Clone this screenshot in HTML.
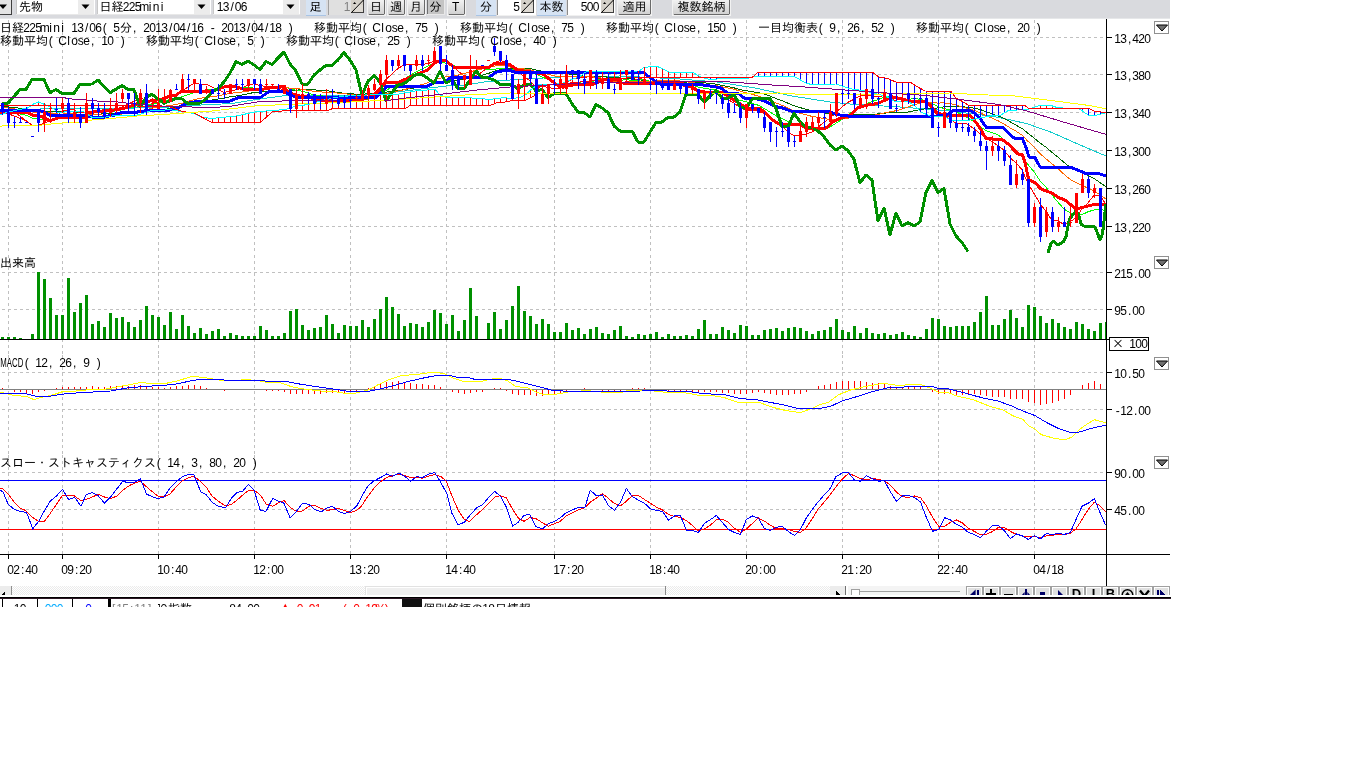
<!DOCTYPE html>
<html lang="ja"><head><meta charset="utf-8"><title>日経225mini チャート</title>
<style>html,body{margin:0;padding:0;background:#fff;overflow:hidden}body{width:1366px;height:768px;position:relative;font-family:'Liberation Sans','IPAGothic',sans-serif;font-size:12px}svg{position:absolute;left:0;top:0;display:block;will-change:transform}text{font-family:'Liberation Sans','IPAGothic',sans-serif;white-space:pre}</style>
</head><body>
<svg width="1366" height="768" viewBox="0 0 1366 768" shape-rendering="crispEdges">
<rect x="0" y="0" width="1366" height="768" fill="#fff"/>
<g stroke="#c0c0c0" stroke-width="1" stroke-dasharray="3 3"><line x1="8.5" y1="20" x2="8.5" y2="254"/><line x1="8.5" y1="255" x2="8.5" y2="355"/><line x1="8.5" y1="355" x2="8.5" y2="455"/><line x1="8.5" y1="455" x2="8.5" y2="554"/><line x1="62.5" y1="20" x2="62.5" y2="254"/><line x1="62.5" y1="255" x2="62.5" y2="355"/><line x1="62.5" y1="355" x2="62.5" y2="455"/><line x1="62.5" y1="455" x2="62.5" y2="554"/><line x1="158.5" y1="20" x2="158.5" y2="254"/><line x1="158.5" y1="255" x2="158.5" y2="355"/><line x1="158.5" y1="355" x2="158.5" y2="455"/><line x1="158.5" y1="455" x2="158.5" y2="554"/><line x1="254.5" y1="20" x2="254.5" y2="254"/><line x1="254.5" y1="255" x2="254.5" y2="355"/><line x1="254.5" y1="355" x2="254.5" y2="455"/><line x1="254.5" y1="455" x2="254.5" y2="554"/><line x1="350.5" y1="20" x2="350.5" y2="254"/><line x1="350.5" y1="255" x2="350.5" y2="355"/><line x1="350.5" y1="355" x2="350.5" y2="455"/><line x1="350.5" y1="455" x2="350.5" y2="554"/><line x1="446.5" y1="20" x2="446.5" y2="254"/><line x1="446.5" y1="255" x2="446.5" y2="355"/><line x1="446.5" y1="355" x2="446.5" y2="455"/><line x1="446.5" y1="455" x2="446.5" y2="554"/><line x1="554.5" y1="20" x2="554.5" y2="254"/><line x1="554.5" y1="255" x2="554.5" y2="355"/><line x1="554.5" y1="355" x2="554.5" y2="455"/><line x1="554.5" y1="455" x2="554.5" y2="554"/><line x1="650.5" y1="20" x2="650.5" y2="254"/><line x1="650.5" y1="255" x2="650.5" y2="355"/><line x1="650.5" y1="355" x2="650.5" y2="455"/><line x1="650.5" y1="455" x2="650.5" y2="554"/><line x1="746.5" y1="20" x2="746.5" y2="254"/><line x1="746.5" y1="255" x2="746.5" y2="355"/><line x1="746.5" y1="355" x2="746.5" y2="455"/><line x1="746.5" y1="455" x2="746.5" y2="554"/><line x1="842.5" y1="20" x2="842.5" y2="254"/><line x1="842.5" y1="255" x2="842.5" y2="355"/><line x1="842.5" y1="355" x2="842.5" y2="455"/><line x1="842.5" y1="455" x2="842.5" y2="554"/><line x1="938.5" y1="20" x2="938.5" y2="254"/><line x1="938.5" y1="255" x2="938.5" y2="355"/><line x1="938.5" y1="355" x2="938.5" y2="455"/><line x1="938.5" y1="455" x2="938.5" y2="554"/><line x1="1034.5" y1="20" x2="1034.5" y2="254"/><line x1="1034.5" y1="255" x2="1034.5" y2="355"/><line x1="1034.5" y1="355" x2="1034.5" y2="455"/><line x1="1034.5" y1="455" x2="1034.5" y2="554"/><line x1="2" y1="37.5" x2="1106" y2="37.5"/><line x1="2" y1="74.5" x2="1106" y2="74.5"/><line x1="2" y1="112.5" x2="1106" y2="112.5"/><line x1="2" y1="150.5" x2="1106" y2="150.5"/><line x1="2" y1="188.5" x2="1106" y2="188.5"/><line x1="2" y1="226.5" x2="1106" y2="226.5"/><line x1="2" y1="272.5" x2="1106" y2="272.5"/><line x1="2" y1="309.5" x2="1106" y2="309.5"/><line x1="2" y1="372.5" x2="1106" y2="372.5"/><line x1="2" y1="409.5" x2="1106" y2="409.5"/><line x1="2" y1="472.5" x2="1106" y2="472.5"/><line x1="2" y1="509.5" x2="1106" y2="509.5"/></g>
<g id="main">
<polyline points="0,112 40,109 114,108.6 170,107 201,105 232,103.5 255,99.7 282,96 340,95.5 380,94 446,86 465,85 484,82 510,80 560,77 620,76 680,79 717,82 755,88 792,96 830,102 850,104 900,107 950,111 990,116 1005,118.7 1027,123.7 1052,132.5 1077,143.7 1106,156" fill="none" stroke="#1cc" stroke-width="1" />
<polyline points="2,106.255 8,106.928 14,107.59 20,108.253 26,108.916 32,110.139 38,110.812 44,111.067 50,111.148 56,111.26 62,111.148 68,111.604 74,111.859 80,112.531 86,112.419 92,112.524 98,112.78 104,113.235 110,113.323 116,113.208 122,112.693 128,112.403 134,112.298 140,111.783 146,111.943 152,111.598 158,110.81 164,109.757 170,108.444 176,107.118 182,104.83 188,103.094 194,101.789 200,101.177 206,100.401 212,100.013 218,99.0578 224,98.3026 230,96.766 236,96.002 242,95.0171 248,93.7218 254,92.4823 260,91.864 266,91.303 272,91.002 278,90.628 284,90.083 290,90.634 296,90.134 302,89.76 308,89.586 314,89.86 320,90.31 326,90.674 332,91.458 338,92.422 344,93.372 350,93.782 356,94.166 362,94.106 368,93.906 374,93.446 380,92.99 386,92.086 392,91.306 398,90.546 404,89.69 410,88.76 416,87.656 422,86.812 428,85.556 434,84.046 440,82.33 446,81.27 452,80.854 458,80.264 464,79.14 470,77.9 476,76.58 482,75.24 488,73.5 494,71.46 500,69.74 506,68.58 512,68.7 518,68.4 524,68.144 530,68.504 536,70.084 542,71.204 548,72.164 554,72.912 560,73.292 566,73.808 572,74.204 578,75.032 584,76.272 590,76.552 596,77.032 602,76.872 608,77.06 614,77.608 620,78.008 626,78.228 632,78.708 638,79.428 644,80.528 650,81.504 656,82.08 662,81.656 668,81.992 674,82.344 680,82.424 686,82.024 692,81.9 698,82.408 704,82.804 710,83.392 716,84.164 722,85.336 728,86.668 734,87.848 740,89.688 746,90.544 752,91.664 758,92.616 764,94.108 770,96.148 776,98.548 782,100.688 788,103.248 794,105.728 800,107.632 806,109.156 812,110.66 818,111.784 824,113.088 830,114.208 836,114.328 842,114.512 848,114.364 854,114.7 860,114.792 866,114.66 872,114.432 878,113.892 884,113.152 890,112.752 896,112.916 902,112.556 908,111.996 914,110.896 920,109.596 926,108.696 932,108.52 938,107.904 944,106.764 950,106.348 956,106.528 962,106.768 968,107.308 974,108.092 980,109.412 986,111.652 992,113.732 998,115.996 1004,118.292 1010,121.772 1016,125.156 1022,128.436 1028,133.336 1034,137.896 1040,143.016 1046,147.196 1052,152.276 1058,157.236 1064,162.336 1070,167.276 1076,170.636 1082,172.796 1088,175.432 1094,178.44 1100,182.536 1106,186.896" fill="none" stroke="#060" stroke-width="1" />
<polyline points="2,111.276 8,113.639 14,115.952 20,118.265 26,120.578 32,125.419 38,125.419 44,123.382 50,120.477 56,117.723 62,111.045 68,109.96 74,109.96 80,112.915 86,111.796 92,112.881 98,111.88 104,112.881 110,109.96 116,109.945 122,106.845 128,104.119 134,101.316 140,98.3 146,99.675 152,101.8 158,102.67 164,101.245 170,100.57 176,96.45 182,91.58 188,86.84 194,83.54 200,84.14 206,84.14 212,86.96 218,89.78 224,92.53 230,90.86 236,89.8 242,87.9 248,85.2 254,83.78 260,85.45 266,86.45 272,86.77 278,88.65 284,89.32 290,92.15 296,93.83 302,95.59 308,97.46 314,100.13 320,98.95 326,99.15 332,100.07 338,101.02 344,101.1 350,101.5 356,101.6 362,100.2 368,97.2 374,92.9 380,86.9 386,79.4 392,73.9 398,68.4 404,65 410,64.3 416,64.3 422,64.3 428,63.7 434,61.1 440,60 446,61.9 452,65.8 458,71 464,75.6 470,76.8 476,75.7 482,72 488,67.2 494,62.7 500,60.7 506,61.6 512,67.5 518,71.7 524,76.32 530,80.72 536,86.92 542,86.42 548,87.22 554,88.84 560,88.24 566,82.92 572,79.3 578,78.04 584,77.9 590,76.3 596,78.02 602,79.14 608,81.14 614,82.28 620,84.08 626,81.68 632,81.18 638,79.04 644,77.3 650,78.18 656,80.86 662,82.24 668,84.52 674,85.4 680,85.32 686,86.64 692,87.64 698,89.3 704,91.14 710,93.08 716,93.62 722,96.48 728,99.34 734,103.12 740,107.78 746,109.92 752,110.78 758,110.88 764,113.58 770,116.38 776,121.7 782,126.3 788,132.2 794,135.4 800,135.6 806,133.9 812,132.1 818,127.2 824,122.2 830,118.2 836,112.5 842,106.9 848,102.2 854,99.2 860,96 866,95.28 872,96.08 878,96.98 884,95.38 890,97.58 896,101.2 902,101.4 908,101.4 914,102.3 920,100.6 926,100.6 932,106.12 938,111.74 944,114.74 950,119.36 956,123.06 962,123.34 968,124.22 974,128.84 980,133.52 986,138.12 992,141.72 998,145.64 1004,150.2 1010,157.8 1016,162.8 1022,169.6 1028,183.68 1034,193.4 1040,203.8 1046,211.4 1052,220.6 1058,220.9 1064,224.5 1070,221.9 1076,217.8 1082,208.72 1088,202.72 1094,195.26 1100,195.66 1106,204.36" fill="none" stroke="#f00" stroke-width="1" />
<polyline points="2,110.238 8,111.52 14,112.776 20,114.032 26,115.289 32,117.948 38,119.229 44,119.467 50,119.271 56,119.15 62,118.232 68,117.689 74,116.671 80,116.696 86,114.76 92,111.963 98,110.92 104,111.421 110,111.437 116,110.871 122,109.863 128,107.999 134,107.099 140,104.13 146,104.81 152,104.323 158,103.395 164,101.281 170,99.435 176,98.0625 182,96.69 188,94.755 194,92.3925 200,92.355 206,90.295 212,89.27 218,88.31 224,88.035 230,87.5 236,86.97 242,87.43 248,87.49 254,88.155 260,88.155 266,88.125 272,87.335 278,86.925 284,86.55 290,88.8 296,90.14 302,91.18 308,93.055 314,94.725 320,95.55 326,96.49 332,97.83 338,99.24 344,100.615 350,100.225 356,100.375 362,100.135 368,99.11 374,97 380,94.2 386,90.5 392,87.05 398,82.8 404,78.95 410,75.6 416,71.85 422,69.1 428,66.05 434,63.05 440,62.15 446,63.1 452,65.05 458,67.35 464,68.35 470,68.4 476,68.8 482,68.9 488,69.1 494,69.15 500,68.75 506,68.65 512,69.75 518,69.45 524,69.51 530,70.71 536,74.26 542,76.96 548,79.46 554,82.58 560,84.48 566,84.92 572,82.86 578,82.63 584,83.37 590,82.27 596,80.47 602,79.22 608,79.59 614,80.09 620,80.19 626,79.85 632,80.16 638,80.09 644,79.79 650,81.13 656,81.27 662,81.71 668,81.78 674,81.35 680,81.75 686,83.75 692,84.94 698,86.91 704,88.27 710,89.2 716,90.13 722,92.06 728,94.32 734,97.13 740,100.43 746,101.77 752,103.63 758,105.11 764,108.35 770,112.08 776,115.81 782,118.54 788,121.54 794,124.49 800,125.99 806,127.8 812,129.2 818,129.7 824,128.8 830,126.9 836,123.2 842,119.5 848,114.7 854,110.7 860,107.1 866,103.89 872,101.49 878,99.59 884,97.29 890,96.79 896,98.24 902,98.74 908,99.19 914,98.84 920,99.09 926,100.9 932,103.76 938,106.57 944,108.52 950,109.98 956,111.83 962,114.73 968,117.98 974,121.79 980,126.44 986,130.59 992,132.53 998,134.93 1004,139.52 1010,145.66 1016,150.46 1022,155.66 1028,164.66 1034,171.8 1040,180.8 1046,187.1 1052,195.1 1058,202.29 1064,208.95 1070,212.85 1076,214.6 1082,214.66 1088,211.81 1094,209.88 1100,208.78 1106,211.08" fill="none" stroke="#0f0" stroke-width="1" />
<polyline points="2,107.269 8,108.06 14,108.838 20,109.616 26,110.394 32,111.874 38,112.665 44,112.934 50,112.986 56,113.075 62,112.885 68,113.405 74,113.674 80,114.464 86,114.274 92,114.355 98,114.624 104,115.144 110,115.204 116,115.011 122,114.048 128,112.844 134,111.885 140,110.413 146,109.785 152,108.143 158,107.157 164,106.351 170,105.436 176,104.467 182,103.277 188,101.377 194,99.7457 200,98.2425 206,97.5526 212,96.7963 218,95.8523 224,94.6579 230,93.4675 236,92.5162 242,92.06 248,91.1225 254,90.2737 260,90.255 266,89.21 272,88.3025 278,87.6175 284,87.2925 290,88.15 296,88.555 302,89.305 308,90.2725 314,91.44 320,91.8525 326,92.3075 332,92.5825 338,93.0825 344,93.5825 350,94.5125 356,95.2575 362,95.6575 368,96.0825 374,95.8625 380,94.875 386,93.495 392,92.44 398,91.02 404,89.7825 410,87.9125 416,86.1125 422,84.6175 428,82.58 434,80.025 440,78.175 446,76.8 452,76.05 458,75.075 464,73.65 470,72 476,70.325 482,69 488,67.575 494,66.1 500,65.45 506,65.875 512,67.4 518,68.4 524,68.93 530,69.555 536,71.53 542,72.93 548,74.28 554,75.865 560,76.615 566,76.785 572,76.305 578,76.04 584,76.44 590,76.49 596,77.365 602,78.09 608,79.525 614,81.335 620,82.335 626,82.385 632,81.51 638,81.36 644,81.58 650,81.7 656,80.87 662,80.465 668,80.685 674,80.72 680,80.97 686,81.8 692,82.55 698,83.5 704,84.03 710,85.165 716,85.7 722,86.885 728,88.05 734,89.24 740,91.09 746,92.76 752,94.285 758,96.01 764,98.31 770,100.64 776,102.97 782,105.3 788,107.93 794,110.81 800,113.21 806,114.785 812,116.415 818,117.405 824,118.575 830,119.49 836,119.505 842,119.02 848,118.12 854,117.595 860,116.545 866,115.845 872,115.345 878,114.645 884,113.045 890,111.845 896,110.72 902,109.12 908,106.945 914,104.77 920,103.095 926,102.395 932,102.625 938,103.08 944,102.905 950,103.385 956,105.035 962,106.735 968,108.585 974,110.315 980,112.765 986,115.745 992,118.145 998,120.75 1004,124.02 1010,127.82 1016,131.145 1022,135.195 1028,141.32 1034,146.795 1040,153.62 1046,158.845 1052,163.815 1058,168.61 1064,174.235 1070,179.255 1076,182.53 1082,185.16 1088,188.235 1094,190.84 1100,194.79 1106,199.09" fill="none" stroke="#f60" stroke-width="1" />
<polyline points="0,112.4 27.5,112.4 33.4,115.7 40,116 46.7,119 50,120.7 58.4,117.8 83.5,117.4 87.6,113.2 96,111.5 114,110 125,108 131,106 137.5,103.7 150,101 161,99.4 170,96 176,95 182,91 200,91 212,91 225,86.6 236,86.6 242.5,89 260,89.7 270,88 282,86.6 287.5,91 295,96.6 302,96.6 309,97 316,100 327,101 340,101 360,100 369,97.5 376,94 381,88 386,82.5 399,82 405,79.4 415,75 427.5,70 435,62.5 440,60.6 446,60.6 454,67.5 489,67.5 495,63 504,63 509,64.3 518,70 530,72 543,74 553,82 558.6,86 563,87.3 567,85.2 579.5,84.8 592,84.8 598.7,82 603.7,79.8 617.5,80 621,83 680,83.3 687.5,84.7 692.5,87 698.7,92 722.5,93 728,96 734.4,100.4 740.6,104 746,108.5 760,108.5 766,113.5 772.5,119.7 778.7,124 800,124.7 806,128 821,129 826,128 834,121 841,118 850,115.5 857.5,108 866,105.4 877.5,103.5 886,99.7 892.5,97 900,98.5 910,101 925,101.6 930,104.7 936,113 942.5,115.4 970,115.4 975,121 981,129.7 986,138.5 1002.5,139.7 1009,144.7 1015,151 1017.5,153.7 1022.5,155 1025,162.5 1028.7,179.6 1035,182.7 1041,189 1052.5,193.4 1058.7,197.7 1065,200 1071,205 1076,209.6 1081,207.7 1096,204 1106,205" fill="none" stroke="#f00" stroke-width="3" />
<polyline points="0,110 37.5,110.3 43.4,111.5 50,115.3 87.6,115.7 92,117 104,117 108.5,116 114,115.7 116,113.7 125,112 137.5,112 150,110 170,110 177.5,108.5 186,103.5 200,101 230,101 240,97 261,97 270,91 282.5,91 290,94.7 295,97 340,97.5 375,98 381,92.5 387,86 427.5,86 435,82 444,82 450,78 489,77.7 495,72.5 502,71 510,70.6 516,72.5 644,72.5 649,77 655,81 662.5,85 680,84 696,84 714,86.6 721,88 727.5,93 739,94 745,98.5 757.5,99 766,101.6 774,106 782.5,108 792.5,111.6 830,112 837.5,114.7 850,116.3 937,116 946,115.4 952.5,111 970,110.4 975,113.5 981,119.7 986,127 1002.5,127 1009,133.5 1014,138 1022.5,138.7 1026,147.5 1029,157 1035,157.5 1040,167 1071,167.5 1077.5,170 1086,173.5 1100,174 1106,176" fill="none" stroke="#00f" stroke-width="3" />
<polyline points="2,103.75 8,103.1 14,96.25 20,89.75 26,89.4 32,79.4 38,79.4 44,79.75 50,92.75 56,89.4 62,93.5 68,93.5 74,93.5 80,84.4 86,84.1 92,84 98,80 104,86.4 110,92.75 116,89.1 122,85.6 128,89.4 134,89.75 140,106.9 146,97.5 152,94.4 158,98.75 164,103.1 170,101 176,98.5 182,99 188,103.5 194,103.5 200,103 206,99 212,92 218,88.5 224,82 230,73 236,61.5 242,64.5 248,61 254,65 260,69.5 266,61.5 272,64.5 278,58 284,52 290,64 296,71 302,84 308,84 314,75 320,70 326,65.5 332,65.5 338,60 344,52.5 350,60 356,70 362,95 368,81 374,75.6 380,82 386,101 392,92.5 398,85 404,83.7 410,79 416,74.4 422,74.4 428,78.7 434,83 440,71 446,83 452,80 458,88.7 464,88.7 470,80 476,71 482,77.5 488,78 494,80 500,84.4 506,84.4 512,84.4 518,89.4 524,84.4 530,84 536,91 542,89.4 548,97.7 554,93.6 560,93.7 566,93.7 572,103.7 578,112 584,112.5 590,117 596,104.4 602,108 608,112.5 614,126 620,131 626,131 632,131 638,142 644,142 650,132 656,122.5 662,122 668,117.5 674,117 680,112 686,94 692,94 698,94 704,102 710,96 716,90.4 722,98 728,98.5 734,94 740,107 746,108.5 752,99 758,98.5 764,98.5 770,98.5 776,108.5 782,126.6 788,126.6 794,113.5 800,121.6 806,127 812,128 818,131 824,136.6 830,145 836,150 842,146 848,150.6 854,159.4 860,183 866,175 872,180 878,221 884,208 890,235 896,213 902,226 908,222.5 914,226 920,222 926,192.5 932,180.6 938,192.5 944,188.7 950,224 956,236 962,242.5 968,251.5" fill="none" stroke="#009000" stroke-width="3" stroke-linejoin="round"/>
<polyline points="1048,252.7 1051,243.4 1053.7,241.5 1058,245 1063.7,241.5 1066,236.5 1069.4,219 1076,211 1078.7,214.6 1081,224 1083.7,226 1093.7,226 1096,229 1100,240 1102.5,234 1106,204" fill="none" stroke="#009000" stroke-width="3" stroke-linejoin="round"/>
<line x1="38.5" y1="102.2" x2="38.5" y2="105.3" stroke="#f00" stroke-width="1"/>
<line x1="44.5" y1="104.3" x2="44.5" y2="105.3" stroke="#f00" stroke-width="1"/>
<line x1="50.5" y1="107.0" x2="50.5" y2="105.3" stroke="#f00" stroke-width="1"/>
<line x1="206.5" y1="117.8" x2="206.5" y2="119.4" stroke="#f00" stroke-width="1"/>
<line x1="212.5" y1="118.4" x2="212.5" y2="122.0" stroke="#f00" stroke-width="1"/>
<line x1="218.5" y1="117.8" x2="218.5" y2="122.0" stroke="#f00" stroke-width="1"/>
<line x1="224.5" y1="117.2" x2="224.5" y2="122.0" stroke="#f00" stroke-width="1"/>
<line x1="230.5" y1="116.6" x2="230.5" y2="122.0" stroke="#f00" stroke-width="1"/>
<line x1="236.5" y1="116.0" x2="236.5" y2="122.0" stroke="#f00" stroke-width="1"/>
<line x1="242.5" y1="114.7" x2="242.5" y2="122.0" stroke="#f00" stroke-width="1"/>
<line x1="248.5" y1="113.5" x2="248.5" y2="122.0" stroke="#f00" stroke-width="1"/>
<line x1="254.5" y1="112.2" x2="254.5" y2="122.0" stroke="#f00" stroke-width="1"/>
<line x1="260.5" y1="111.5" x2="260.5" y2="122.0" stroke="#f00" stroke-width="1"/>
<line x1="266.5" y1="111.0" x2="266.5" y2="117.5" stroke="#f00" stroke-width="1"/>
<line x1="272.5" y1="110.5" x2="272.5" y2="112.1" stroke="#f00" stroke-width="1"/>
<line x1="278.5" y1="110.1" x2="278.5" y2="111.3" stroke="#f00" stroke-width="1"/>
<line x1="284.5" y1="109.5" x2="284.5" y2="110.9" stroke="#f00" stroke-width="1"/>
<line x1="290.5" y1="108.5" x2="290.5" y2="110.4" stroke="#f00" stroke-width="1"/>
<line x1="296.5" y1="105.9" x2="296.5" y2="110.4" stroke="#f00" stroke-width="1"/>
<line x1="302.5" y1="105.3" x2="302.5" y2="110.4" stroke="#f00" stroke-width="1"/>
<line x1="308.5" y1="104.6" x2="308.5" y2="110.4" stroke="#f00" stroke-width="1"/>
<line x1="314.5" y1="102.8" x2="314.5" y2="110.4" stroke="#f00" stroke-width="1"/>
<line x1="320.5" y1="101.0" x2="320.5" y2="110.4" stroke="#f00" stroke-width="1"/>
<line x1="326.5" y1="99.7" x2="326.5" y2="110.4" stroke="#f00" stroke-width="1"/>
<line x1="332.5" y1="98.3" x2="332.5" y2="108.9" stroke="#f00" stroke-width="1"/>
<line x1="338.5" y1="97.0" x2="338.5" y2="108.7" stroke="#f00" stroke-width="1"/>
<line x1="344.5" y1="96.3" x2="344.5" y2="108.7" stroke="#f00" stroke-width="1"/>
<line x1="350.5" y1="95.9" x2="350.5" y2="108.7" stroke="#f00" stroke-width="1"/>
<line x1="356.5" y1="95.5" x2="356.5" y2="108.7" stroke="#f00" stroke-width="1"/>
<line x1="362.5" y1="95.2" x2="362.5" y2="108.7" stroke="#f00" stroke-width="1"/>
<line x1="368.5" y1="94.8" x2="368.5" y2="108.7" stroke="#f00" stroke-width="1"/>
<line x1="374.5" y1="94.4" x2="374.5" y2="108.7" stroke="#f00" stroke-width="1"/>
<line x1="380.5" y1="94.1" x2="380.5" y2="108.7" stroke="#f00" stroke-width="1"/>
<line x1="386.5" y1="94.0" x2="386.5" y2="108.7" stroke="#f00" stroke-width="1"/>
<line x1="392.5" y1="94.0" x2="392.5" y2="108.7" stroke="#f00" stroke-width="1"/>
<line x1="398.5" y1="94.0" x2="398.5" y2="108.7" stroke="#f00" stroke-width="1"/>
<line x1="404.5" y1="93.1" x2="404.5" y2="108.7" stroke="#f00" stroke-width="1"/>
<line x1="410.5" y1="91.9" x2="410.5" y2="105.6" stroke="#f00" stroke-width="1"/>
<line x1="416.5" y1="90.9" x2="416.5" y2="105.6" stroke="#f00" stroke-width="1"/>
<line x1="422.5" y1="90.4" x2="422.5" y2="105.6" stroke="#f00" stroke-width="1"/>
<line x1="428.5" y1="90.0" x2="428.5" y2="105.6" stroke="#f00" stroke-width="1"/>
<line x1="434.5" y1="89.5" x2="434.5" y2="105.6" stroke="#f00" stroke-width="1"/>
<line x1="440.5" y1="95.0" x2="440.5" y2="105.6" stroke="#f00" stroke-width="1"/>
<line x1="446.5" y1="97.5" x2="446.5" y2="105.6" stroke="#f00" stroke-width="1"/>
<line x1="452.5" y1="97.5" x2="452.5" y2="105.6" stroke="#f00" stroke-width="1"/>
<line x1="458.5" y1="97.5" x2="458.5" y2="105.6" stroke="#f00" stroke-width="1"/>
<line x1="464.5" y1="97.5" x2="464.5" y2="105.6" stroke="#f00" stroke-width="1"/>
<line x1="470.5" y1="97.9" x2="470.5" y2="105.6" stroke="#f00" stroke-width="1"/>
<line x1="476.5" y1="98.3" x2="476.5" y2="105.6" stroke="#f00" stroke-width="1"/>
<line x1="482.5" y1="98.8" x2="482.5" y2="105.6" stroke="#f00" stroke-width="1"/>
<line x1="488.5" y1="99.2" x2="488.5" y2="105.6" stroke="#f00" stroke-width="1"/>
<line x1="494.5" y1="98.9" x2="494.5" y2="103.9" stroke="#f00" stroke-width="1"/>
<line x1="500.5" y1="98.2" x2="500.5" y2="102.7" stroke="#f00" stroke-width="1"/>
<line x1="506.5" y1="97.9" x2="506.5" y2="101.8" stroke="#f00" stroke-width="1"/>
<line x1="512.5" y1="98.5" x2="512.5" y2="100.9" stroke="#f00" stroke-width="1"/>
<line x1="518.5" y1="97.6" x2="518.5" y2="100.8" stroke="#f00" stroke-width="1"/>
<line x1="524.5" y1="95.4" x2="524.5" y2="100.6" stroke="#f00" stroke-width="1"/>
<line x1="530.5" y1="90.5" x2="530.5" y2="98.0" stroke="#f00" stroke-width="1"/>
<line x1="536.5" y1="85.8" x2="536.5" y2="92.7" stroke="#f00" stroke-width="1"/>
<line x1="542.5" y1="84.4" x2="542.5" y2="85.8" stroke="#f00" stroke-width="1"/>
<line x1="566.5" y1="81.9" x2="566.5" y2="83.4" stroke="#f00" stroke-width="1"/>
<line x1="572.5" y1="79.3" x2="572.5" y2="82.8" stroke="#f00" stroke-width="1"/>
<line x1="578.5" y1="77.4" x2="578.5" y2="82.2" stroke="#f00" stroke-width="1"/>
<line x1="584.5" y1="73.1" x2="584.5" y2="81.6" stroke="#f00" stroke-width="1"/>
<line x1="590.5" y1="71.4" x2="590.5" y2="81.0" stroke="#f00" stroke-width="1"/>
<line x1="596.5" y1="71.3" x2="596.5" y2="80.4" stroke="#f00" stroke-width="1"/>
<line x1="602.5" y1="71.3" x2="602.5" y2="79.8" stroke="#f00" stroke-width="1"/>
<line x1="608.5" y1="71.2" x2="608.5" y2="79.4" stroke="#f00" stroke-width="1"/>
<line x1="614.5" y1="71.2" x2="614.5" y2="79.0" stroke="#f00" stroke-width="1"/>
<line x1="620.5" y1="71.1" x2="620.5" y2="78.5" stroke="#f00" stroke-width="1"/>
<line x1="626.5" y1="71.1" x2="626.5" y2="78.0" stroke="#f00" stroke-width="1"/>
<line x1="632.5" y1="71.1" x2="632.5" y2="77.6" stroke="#f00" stroke-width="1"/>
<line x1="638.5" y1="71.0" x2="638.5" y2="77.2" stroke="#f00" stroke-width="1"/>
<line x1="644.5" y1="67.5" x2="644.5" y2="77.0" stroke="#f00" stroke-width="1"/>
<line x1="650.5" y1="66.8" x2="650.5" y2="77.0" stroke="#f00" stroke-width="1"/>
<line x1="656.5" y1="66.0" x2="656.5" y2="77.0" stroke="#f00" stroke-width="1"/>
<line x1="662.5" y1="68.5" x2="662.5" y2="77.0" stroke="#f00" stroke-width="1"/>
<line x1="668.5" y1="71.5" x2="668.5" y2="77.0" stroke="#f00" stroke-width="1"/>
<line x1="674.5" y1="72.2" x2="674.5" y2="77.0" stroke="#f00" stroke-width="1"/>
<line x1="680.5" y1="72.5" x2="680.5" y2="77.0" stroke="#f00" stroke-width="1"/>
<line x1="686.5" y1="72.2" x2="686.5" y2="77.0" stroke="#f00" stroke-width="1"/>
<line x1="692.5" y1="72.0" x2="692.5" y2="77.1" stroke="#f00" stroke-width="1"/>
<line x1="698.5" y1="75.4" x2="698.5" y2="77.1" stroke="#f00" stroke-width="1"/>
<line x1="710.5" y1="77.2" x2="710.5" y2="79.7" stroke="#00f" stroke-width="1"/>
<line x1="716.5" y1="77.2" x2="716.5" y2="79.2" stroke="#00f" stroke-width="1"/>
<line x1="758.5" y1="72.3" x2="758.5" y2="76.2" stroke="#00f" stroke-width="1"/>
<line x1="764.5" y1="72.3" x2="764.5" y2="76.4" stroke="#00f" stroke-width="1"/>
<line x1="770.5" y1="72.3" x2="770.5" y2="76.6" stroke="#00f" stroke-width="1"/>
<line x1="776.5" y1="72.3" x2="776.5" y2="76.7" stroke="#00f" stroke-width="1"/>
<line x1="782.5" y1="72.3" x2="782.5" y2="76.8" stroke="#00f" stroke-width="1"/>
<line x1="788.5" y1="72.3" x2="788.5" y2="76.9" stroke="#00f" stroke-width="1"/>
<line x1="794.5" y1="72.3" x2="794.5" y2="77.0" stroke="#00f" stroke-width="1"/>
<line x1="800.5" y1="72.3" x2="800.5" y2="79.7" stroke="#00f" stroke-width="1"/>
<line x1="806.5" y1="72.3" x2="806.5" y2="83.0" stroke="#00f" stroke-width="1"/>
<line x1="812.5" y1="72.3" x2="812.5" y2="84.7" stroke="#00f" stroke-width="1"/>
<line x1="818.5" y1="72.3" x2="818.5" y2="84.5" stroke="#00f" stroke-width="1"/>
<line x1="824.5" y1="72.3" x2="824.5" y2="84.3" stroke="#00f" stroke-width="1"/>
<line x1="830.5" y1="72.3" x2="830.5" y2="84.2" stroke="#00f" stroke-width="1"/>
<line x1="836.5" y1="72.3" x2="836.5" y2="84.0" stroke="#00f" stroke-width="1"/>
<line x1="842.5" y1="72.3" x2="842.5" y2="86.0" stroke="#00f" stroke-width="1"/>
<line x1="848.5" y1="72.3" x2="848.5" y2="88.0" stroke="#00f" stroke-width="1"/>
<line x1="854.5" y1="72.3" x2="854.5" y2="89.3" stroke="#00f" stroke-width="1"/>
<line x1="860.5" y1="72.3" x2="860.5" y2="90.1" stroke="#00f" stroke-width="1"/>
<line x1="866.5" y1="72.3" x2="866.5" y2="91.4" stroke="#00f" stroke-width="1"/>
<line x1="872.5" y1="72.3" x2="872.5" y2="92.8" stroke="#00f" stroke-width="1"/>
<line x1="878.5" y1="76.3" x2="878.5" y2="94.3" stroke="#00f" stroke-width="1"/>
<line x1="884.5" y1="77.9" x2="884.5" y2="95.8" stroke="#00f" stroke-width="1"/>
<line x1="890.5" y1="79.5" x2="890.5" y2="98.5" stroke="#00f" stroke-width="1"/>
<line x1="896.5" y1="82.0" x2="896.5" y2="101.1" stroke="#00f" stroke-width="1"/>
<line x1="902.5" y1="82.0" x2="902.5" y2="101.5" stroke="#00f" stroke-width="1"/>
<line x1="908.5" y1="82.0" x2="908.5" y2="101.9" stroke="#00f" stroke-width="1"/>
<line x1="914.5" y1="84.7" x2="914.5" y2="105.3" stroke="#00f" stroke-width="1"/>
<line x1="920.5" y1="88.2" x2="920.5" y2="111.0" stroke="#00f" stroke-width="1"/>
<line x1="926.5" y1="91.0" x2="926.5" y2="114.2" stroke="#00f" stroke-width="1"/>
<line x1="932.5" y1="91.2" x2="932.5" y2="116.1" stroke="#00f" stroke-width="1"/>
<line x1="938.5" y1="91.3" x2="938.5" y2="116.6" stroke="#00f" stroke-width="1"/>
<line x1="944.5" y1="91.4" x2="944.5" y2="117.0" stroke="#00f" stroke-width="1"/>
<line x1="950.5" y1="91.6" x2="950.5" y2="119.2" stroke="#00f" stroke-width="1"/>
<line x1="956.5" y1="98.0" x2="956.5" y2="120.3" stroke="#00f" stroke-width="1"/>
<line x1="962.5" y1="101.3" x2="962.5" y2="120.8" stroke="#00f" stroke-width="1"/>
<line x1="968.5" y1="104.8" x2="968.5" y2="120.4" stroke="#00f" stroke-width="1"/>
<line x1="974.5" y1="105.4" x2="974.5" y2="119.3" stroke="#00f" stroke-width="1"/>
<line x1="980.5" y1="105.4" x2="980.5" y2="118.1" stroke="#00f" stroke-width="1"/>
<line x1="986.5" y1="105.5" x2="986.5" y2="116.8" stroke="#00f" stroke-width="1"/>
<line x1="992.5" y1="105.5" x2="992.5" y2="115.9" stroke="#00f" stroke-width="1"/>
<line x1="998.5" y1="105.5" x2="998.5" y2="115.7" stroke="#00f" stroke-width="1"/>
<line x1="1004.5" y1="105.5" x2="1004.5" y2="113.1" stroke="#00f" stroke-width="1"/>
<line x1="1010.5" y1="105.5" x2="1010.5" y2="110.8" stroke="#00f" stroke-width="1"/>
<line x1="1016.5" y1="105.6" x2="1016.5" y2="110.2" stroke="#00f" stroke-width="1"/>
<line x1="1022.5" y1="105.6" x2="1022.5" y2="109.7" stroke="#00f" stroke-width="1"/>
<line x1="1028.5" y1="107.8" x2="1028.5" y2="109.2" stroke="#00f" stroke-width="1"/>
<line x1="1040.5" y1="105.3" x2="1040.5" y2="108.5" stroke="#f00" stroke-width="1"/>
<line x1="1046.5" y1="105.4" x2="1046.5" y2="108.5" stroke="#f00" stroke-width="1"/>
<line x1="1052.5" y1="106.0" x2="1052.5" y2="108.5" stroke="#f00" stroke-width="1"/>
<line x1="1082.5" y1="108.5" x2="1082.5" y2="110.7" stroke="#00f" stroke-width="1"/>
<line x1="1088.5" y1="108.5" x2="1088.5" y2="114.9" stroke="#00f" stroke-width="1"/>
<line x1="1094.5" y1="111.0" x2="1094.5" y2="115.6" stroke="#00f" stroke-width="1"/>
<line x1="1100.5" y1="111.8" x2="1100.5" y2="114.3" stroke="#00f" stroke-width="1"/>
<polyline points="0,114.5 16.7,110 27.5,108 33.4,104 38.4,102 43.4,104 50,107 54,109 58.4,113 66.8,111.5 83.5,111.5 92,117.4 100,118 114,115.7 125,115 137.5,115 150,111 170,109.7 194,113.5 201,117 211,118.5 236,116 255,112 266,111 282.5,109.7 290,108.5 295,106 307.5,104.7 320,101 340,96.5 365,95 381,94 399,94 415,91 435,89.4 440,95 446,97.5 465,97.5 490,99.4 496,98.6 504,97.7 512.7,98.6 521,97 526,94.4 529.4,91 533.6,87.7 537.7,84.4 542.7,84.4 549.4,84.8 554.4,84.4 564.4,82.7 569.5,80.2 574.5,78.5 579.5,76.9 584.5,72.7 587.8,71.4 639,71 644,67.5 656,66 662.5,68.7 669,72 680,72.5 692,72 700,76.6 711,80 720,78.5 750,78 755,76 767,76.6 795,77 806,83 812,84.7 836,84 850,88.7 862,90.4 875,93.5 887,96.6 894,101 909,102 915,106 921,112 930,116 944,117 952,120 965,121 977,118.7 990,116 1000,115.6 1007.5,111 1017.5,110 1027.5,109.4 1035,107 1041,105 1052.5,106 1057.5,107.7 1079,109 1082.5,111 1089,115.6 1095,115.6 1106,112.7" fill="none" stroke="#0ff" stroke-width="1" />
<polyline points="0,105.3 114,105.3 170,107 182.5,111.6 194,113 211,122 261,122 272.5,111.6 282.5,111 290,110.4 327.5,110.4 332.5,108.7 405,108.7 410,105.6 490,105.6 496,103 502,102.5 510,101 525,100.6 534,96 540,86 560,84 600,80 640,77 680,77 752,77.5 758,72.3 872.5,72.3 879,77 887.5,78.5 896,82 910,82 916,86 925,91 951,91.6 956,98 962.5,101.6 969,105.4 1025,105.6 1029,108.5 1089,108.5 1094,111 1106,112.7" fill="none" stroke="#f00" stroke-width="1" />
<polyline points="15,112.4 31.7,125 35,125.3 39,125.3" fill="none" stroke="#f00" stroke-width="1" />
<polyline points="0,126.6 5,125.3 33,125.3 42,125 58.4,123.2 75,122.4 83.5,122.4 92,120 114,118.2 137.5,116 170,114 212,111 255,106 295,104 340,102.5 390,100 427,97.5 465,95 510,93 600,93.5 680,93.5 780,93 805,94.7 850,94.5 900,93.7 950,93 975,94.5 1015,96 1052,100.6 1090,105.6 1106,108.7" fill="none" stroke="#ff0" stroke-width="1" />
<polyline points="0,97.4 65,97.4 66,98.6 78.5,99.4 90,100.3 102,101.5 114,101.5 137.5,104.4 170,106.5 214,107.5 232,106 257,102 282,101 307,100.4 340,101 384,101 410,97.5 446,93.7 477.5,90 510,87 547,85 585,83 680,81.6 730,82 767,84.7 805,87 850,90.4 887,93 925,95.4 962,99.7 1000,104.7 1027,111 1065,122.5 1106,134.4" fill="none" stroke="#800080" stroke-width="1" />
<rect x="2" y="102.8" width="1" height="11.7" fill="#00f"/>
<rect x="1" y="103.2" width="3" height="9.2" fill="#00f"/>
<rect x="8" y="107.4" width="1" height="20.5" fill="#00f"/>
<rect x="7" y="111.5" width="3" height="11.3" fill="#00f"/>
<rect x="14" y="117.0" width="1" height="10.9" fill="#00f"/>
<rect x="13" y="122.2" width="3" height="1.0" fill="#00f"/>
<rect x="20" y="117.0" width="1" height="5.8" fill="#00f"/>
<rect x="19" y="122.2" width="3" height="1.0" fill="#00f"/>
<rect x="26" y="107.4" width="1" height="1.7" fill="#00f"/>
<rect x="25" y="122.2" width="3" height="1.0" fill="#00f"/>
<rect x="32" y="136.3" width="1" height="1.0" fill="#00f"/>
<rect x="31" y="136.3" width="3" height="1.0" fill="#00f"/>
<rect x="38" y="109.0" width="1" height="23.0" fill="#00f"/>
<rect x="37" y="110.7" width="3" height="12.1" fill="#00f"/>
<rect x="44" y="103.2" width="1" height="28.8" fill="#f00"/>
<rect x="43" y="112.4" width="3" height="10.4" fill="#f00"/>
<rect x="50" y="103.2" width="1" height="19.6" fill="#f00"/>
<rect x="49" y="108.0" width="3" height="1.0" fill="#f00"/>
<rect x="56" y="97.8" width="1" height="15.0" fill="#00f"/>
<rect x="55" y="108.5" width="3" height="1.0" fill="#00f"/>
<rect x="62" y="97.8" width="1" height="15.0" fill="#f00"/>
<rect x="61" y="103.2" width="3" height="5.4" fill="#f00"/>
<rect x="68" y="98.2" width="1" height="24.6" fill="#00f"/>
<rect x="67" y="103.2" width="3" height="14.2" fill="#00f"/>
<rect x="74" y="103.2" width="1" height="19.6" fill="#f00"/>
<rect x="73" y="112.4" width="3" height="5.0" fill="#f00"/>
<rect x="80" y="107.4" width="1" height="20.5" fill="#00f"/>
<rect x="79" y="115.3" width="3" height="7.5" fill="#00f"/>
<rect x="86" y="93.2" width="1" height="29.6" fill="#f00"/>
<rect x="85" y="103.2" width="3" height="19.6" fill="#f00"/>
<rect x="92" y="98.2" width="1" height="19.2" fill="#00f"/>
<rect x="91" y="103.2" width="3" height="5.4" fill="#00f"/>
<rect x="98" y="103.2" width="1" height="14.2" fill="#00f"/>
<rect x="97" y="108.2" width="3" height="4.2" fill="#00f"/>
<rect x="104" y="103.2" width="1" height="15.4" fill="#00f"/>
<rect x="103" y="112.4" width="3" height="5.0" fill="#00f"/>
<rect x="110" y="98.2" width="1" height="19.2" fill="#f00"/>
<rect x="109" y="108.2" width="3" height="4.6" fill="#f00"/>
<rect x="116" y="93.1" width="1" height="19.4" fill="#f00"/>
<rect x="115" y="103.1" width="3" height="5.6" fill="#f00"/>
<rect x="122" y="89.4" width="1" height="13.8" fill="#f00"/>
<rect x="121" y="93.1" width="3" height="5.6" fill="#f00"/>
<rect x="128" y="93.1" width="1" height="19.4" fill="#00f"/>
<rect x="127" y="93.1" width="3" height="5.6" fill="#00f"/>
<rect x="134" y="93.1" width="1" height="23.1" fill="#00f"/>
<rect x="133" y="102.9" width="3" height="1.0" fill="#00f"/>
<rect x="140" y="89.4" width="1" height="23.1" fill="#f00"/>
<rect x="139" y="93.1" width="3" height="10.0" fill="#f00"/>
<rect x="146" y="84.4" width="1" height="30.6" fill="#00f"/>
<rect x="145" y="93.1" width="3" height="16.9" fill="#00f"/>
<rect x="152" y="98.1" width="1" height="10.6" fill="#f00"/>
<rect x="151" y="102.9" width="3" height="1.0" fill="#f00"/>
<rect x="158" y="89.4" width="1" height="19.4" fill="#f00"/>
<rect x="157" y="103.1" width="3" height="5.6" fill="#f00"/>
<rect x="164" y="89.4" width="1" height="13.8" fill="#f00"/>
<rect x="163" y="97.5" width="3" height="5.0" fill="#f00"/>
<rect x="170" y="88.5" width="1" height="13.8" fill="#f00"/>
<rect x="169" y="89.8" width="3" height="12.5" fill="#f00"/>
<rect x="176" y="84.1" width="1" height="5.6" fill="#00f"/>
<rect x="175" y="89.1" width="3" height="1.0" fill="#00f"/>
<rect x="182" y="74.1" width="1" height="15.6" fill="#f00"/>
<rect x="181" y="79.1" width="3" height="10.6" fill="#f00"/>
<rect x="188" y="74.1" width="1" height="15.6" fill="#00f"/>
<rect x="187" y="78.9" width="3" height="1.0" fill="#00f"/>
<rect x="194" y="79.1" width="1" height="11.9" fill="#f00"/>
<rect x="193" y="79.1" width="3" height="5.0" fill="#f00"/>
<rect x="200" y="79.1" width="1" height="14.4" fill="#00f"/>
<rect x="199" y="84.1" width="3" height="9.4" fill="#00f"/>
<rect x="206" y="86.0" width="1" height="7.5" fill="#f00"/>
<rect x="205" y="88.5" width="3" height="2.5" fill="#f00"/>
<rect x="212" y="89.1" width="1" height="4.4" fill="#00f"/>
<rect x="211" y="89.1" width="3" height="4.4" fill="#00f"/>
<rect x="218" y="84.1" width="1" height="14.4" fill="#00f"/>
<rect x="217" y="93.2" width="3" height="1.0" fill="#00f"/>
<rect x="224" y="89.1" width="1" height="9.4" fill="#00f"/>
<rect x="223" y="93.2" width="3" height="1.0" fill="#00f"/>
<rect x="230" y="84.1" width="1" height="9.4" fill="#f00"/>
<rect x="229" y="84.1" width="3" height="9.4" fill="#f00"/>
<rect x="236" y="79.1" width="1" height="10.6" fill="#00f"/>
<rect x="235" y="83.9" width="3" height="1.0" fill="#00f"/>
<rect x="242" y="79.1" width="1" height="10.6" fill="#00f"/>
<rect x="241" y="83.9" width="3" height="1.0" fill="#00f"/>
<rect x="248" y="79.1" width="1" height="9.4" fill="#f00"/>
<rect x="247" y="79.1" width="3" height="6.9" fill="#f00"/>
<rect x="254" y="79.1" width="1" height="10.6" fill="#00f"/>
<rect x="253" y="79.1" width="3" height="5.0" fill="#00f"/>
<rect x="260" y="79.1" width="1" height="14.4" fill="#00f"/>
<rect x="259" y="84.1" width="3" height="9.4" fill="#00f"/>
<rect x="266" y="79.1" width="1" height="9.4" fill="#f00"/>
<rect x="265" y="83.9" width="3" height="1.0" fill="#f00"/>
<rect x="272" y="84.1" width="1" height="4.4" fill="#f00"/>
<rect x="271" y="83.9" width="3" height="1.0" fill="#f00"/>
<rect x="278" y="84.1" width="1" height="6.9" fill="#00f"/>
<rect x="277" y="88.5" width="3" height="1.0" fill="#00f"/>
<rect x="284" y="85.4" width="1" height="8.1" fill="#f00"/>
<rect x="283" y="85.4" width="3" height="8.1" fill="#f00"/>
<rect x="290" y="89.1" width="1" height="23.8" fill="#00f"/>
<rect x="289" y="89.1" width="3" height="19.4" fill="#00f"/>
<rect x="296" y="88.5" width="1" height="29.4" fill="#f00"/>
<rect x="295" y="93.5" width="3" height="15.0" fill="#f00"/>
<rect x="302" y="84.1" width="1" height="19.4" fill="#f00"/>
<rect x="301" y="93.5" width="3" height="5.0" fill="#f00"/>
<rect x="308" y="91.6" width="1" height="11.9" fill="#00f"/>
<rect x="307" y="93.5" width="3" height="5.0" fill="#00f"/>
<rect x="314" y="93.5" width="1" height="10.0" fill="#00f"/>
<rect x="313" y="93.5" width="3" height="10.0" fill="#00f"/>
<rect x="320" y="93.5" width="1" height="15.0" fill="#00f"/>
<rect x="319" y="98.2" width="3" height="1.0" fill="#00f"/>
<rect x="326" y="89.1" width="1" height="14.4" fill="#f00"/>
<rect x="325" y="98.5" width="3" height="5.0" fill="#f00"/>
<rect x="332" y="89.1" width="1" height="14.4" fill="#00f"/>
<rect x="331" y="98.2" width="3" height="1.0" fill="#00f"/>
<rect x="338" y="94.8" width="1" height="11.2" fill="#00f"/>
<rect x="337" y="98.5" width="3" height="5.0" fill="#00f"/>
<rect x="344" y="95.0" width="1" height="12.5" fill="#00f"/>
<rect x="343" y="97.5" width="3" height="5.0" fill="#00f"/>
<rect x="350" y="93.8" width="1" height="13.8" fill="#00f"/>
<rect x="349" y="100.0" width="3" height="1.0" fill="#00f"/>
<rect x="356" y="93.8" width="1" height="7.5" fill="#f00"/>
<rect x="355" y="96.9" width="3" height="1.0" fill="#f00"/>
<rect x="362" y="90.0" width="1" height="11.2" fill="#f00"/>
<rect x="361" y="93.8" width="3" height="5.0" fill="#f00"/>
<rect x="368" y="85.0" width="1" height="15.0" fill="#f00"/>
<rect x="367" y="88.1" width="3" height="6.9" fill="#f00"/>
<rect x="374" y="79.4" width="1" height="11.9" fill="#f00"/>
<rect x="373" y="83.8" width="3" height="6.2" fill="#f00"/>
<rect x="380" y="70.0" width="1" height="17.5" fill="#f00"/>
<rect x="379" y="73.8" width="3" height="11.2" fill="#f00"/>
<rect x="386" y="55.0" width="1" height="27.5" fill="#f00"/>
<rect x="385" y="60.0" width="3" height="15.0" fill="#f00"/>
<rect x="392" y="60.0" width="1" height="10.6" fill="#00f"/>
<rect x="391" y="60.0" width="3" height="6.2" fill="#00f"/>
<rect x="398" y="55.0" width="1" height="12.5" fill="#f00"/>
<rect x="397" y="60.0" width="3" height="5.6" fill="#f00"/>
<rect x="404" y="55.0" width="1" height="15.6" fill="#00f"/>
<rect x="403" y="55.0" width="3" height="11.2" fill="#00f"/>
<rect x="410" y="65.0" width="1" height="10.0" fill="#00f"/>
<rect x="409" y="65.0" width="3" height="5.6" fill="#00f"/>
<rect x="416" y="55.0" width="1" height="15.0" fill="#f00"/>
<rect x="415" y="60.0" width="3" height="6.2" fill="#f00"/>
<rect x="422" y="55.0" width="1" height="15.6" fill="#00f"/>
<rect x="421" y="60.0" width="3" height="6.2" fill="#00f"/>
<rect x="428" y="55.0" width="1" height="10.0" fill="#f00"/>
<rect x="427" y="60.2" width="3" height="1.0" fill="#f00"/>
<rect x="434" y="46.9" width="1" height="18.1" fill="#f00"/>
<rect x="433" y="51.2" width="3" height="11.2" fill="#f00"/>
<rect x="440" y="46.2" width="1" height="25.0" fill="#00f"/>
<rect x="439" y="46.2" width="3" height="17.5" fill="#00f"/>
<rect x="446" y="55.0" width="1" height="15.6" fill="#00f"/>
<rect x="445" y="65.0" width="3" height="5.6" fill="#00f"/>
<rect x="452" y="65.0" width="1" height="25.0" fill="#00f"/>
<rect x="451" y="70.0" width="3" height="15.0" fill="#00f"/>
<rect x="458" y="75.0" width="1" height="15.0" fill="#00f"/>
<rect x="457" y="78.8" width="3" height="6.2" fill="#00f"/>
<rect x="464" y="75.0" width="1" height="12.5" fill="#f00"/>
<rect x="463" y="75.0" width="3" height="5.0" fill="#f00"/>
<rect x="470" y="55.0" width="1" height="30.0" fill="#f00"/>
<rect x="469" y="70.0" width="3" height="15.0" fill="#f00"/>
<rect x="476" y="60.0" width="1" height="10.0" fill="#f00"/>
<rect x="475" y="66.2" width="3" height="3.1" fill="#f00"/>
<rect x="482" y="65.0" width="1" height="1.2" fill="#00f"/>
<rect x="481" y="65.2" width="3" height="1.0" fill="#00f"/>
<rect x="488" y="60.4" width="1" height="1.0" fill="#f00"/>
<rect x="487" y="60.4" width="3" height="1.0" fill="#f00"/>
<rect x="494" y="37.5" width="1" height="18.8" fill="#00f"/>
<rect x="493" y="45.6" width="3" height="6.2" fill="#00f"/>
<rect x="500" y="51.2" width="1" height="11.2" fill="#00f"/>
<rect x="499" y="51.2" width="3" height="8.8" fill="#00f"/>
<rect x="506" y="55.0" width="1" height="25.0" fill="#00f"/>
<rect x="505" y="60.0" width="3" height="10.0" fill="#00f"/>
<rect x="512" y="73.9" width="1" height="24.6" fill="#00f"/>
<rect x="511" y="73.9" width="3" height="24.6" fill="#00f"/>
<rect x="518" y="79.4" width="1" height="29.2" fill="#f00"/>
<rect x="517" y="84.4" width="3" height="9.2" fill="#f00"/>
<rect x="524" y="73.9" width="1" height="27.1" fill="#f00"/>
<rect x="523" y="73.9" width="3" height="11.3" fill="#f00"/>
<rect x="530" y="70.2" width="1" height="14.2" fill="#00f"/>
<rect x="529" y="73.9" width="3" height="5.4" fill="#00f"/>
<rect x="536" y="73.9" width="1" height="29.6" fill="#00f"/>
<rect x="535" y="79.4" width="3" height="24.2" fill="#00f"/>
<rect x="542" y="84.4" width="1" height="19.2" fill="#f00"/>
<rect x="541" y="93.6" width="3" height="10.0" fill="#f00"/>
<rect x="548" y="84.4" width="1" height="19.2" fill="#f00"/>
<rect x="547" y="84.4" width="3" height="9.2" fill="#f00"/>
<rect x="554" y="79.4" width="1" height="14.2" fill="#00f"/>
<rect x="553" y="84.2" width="3" height="1.0" fill="#00f"/>
<rect x="560" y="73.9" width="1" height="19.6" fill="#f00"/>
<rect x="559" y="79.4" width="3" height="5.0" fill="#f00"/>
<rect x="566" y="65.2" width="1" height="28.4" fill="#f00"/>
<rect x="565" y="73.9" width="3" height="14.6" fill="#f00"/>
<rect x="572" y="70.2" width="1" height="9.2" fill="#00f"/>
<rect x="571" y="70.2" width="3" height="3.8" fill="#00f"/>
<rect x="578" y="70.2" width="1" height="19.2" fill="#00f"/>
<rect x="577" y="70.2" width="3" height="9.2" fill="#00f"/>
<rect x="584" y="72.7" width="1" height="20.9" fill="#00f"/>
<rect x="583" y="79.4" width="3" height="5.0" fill="#00f"/>
<rect x="590" y="70.2" width="1" height="19.2" fill="#f00"/>
<rect x="589" y="70.2" width="3" height="14.2" fill="#f00"/>
<rect x="596" y="70.2" width="1" height="19.2" fill="#00f"/>
<rect x="595" y="72.7" width="3" height="11.7" fill="#00f"/>
<rect x="602" y="72.7" width="1" height="16.7" fill="#f00"/>
<rect x="601" y="79.4" width="3" height="5.0" fill="#f00"/>
<rect x="608" y="72.7" width="1" height="16.7" fill="#00f"/>
<rect x="607" y="79.4" width="3" height="10.0" fill="#00f"/>
<rect x="614" y="83.8" width="1" height="10.0" fill="#00f"/>
<rect x="613" y="89.0" width="3" height="1.0" fill="#00f"/>
<rect x="620" y="70.0" width="1" height="20.0" fill="#f00"/>
<rect x="619" y="79.4" width="3" height="10.6" fill="#f00"/>
<rect x="626" y="70.0" width="1" height="11.2" fill="#f00"/>
<rect x="625" y="70.0" width="3" height="5.0" fill="#f00"/>
<rect x="632" y="70.0" width="1" height="10.0" fill="#00f"/>
<rect x="631" y="70.0" width="3" height="10.0" fill="#00f"/>
<rect x="638" y="73.1" width="1" height="11.9" fill="#00f"/>
<rect x="637" y="79.0" width="3" height="1.0" fill="#00f"/>
<rect x="644" y="66.9" width="1" height="18.1" fill="#f00"/>
<rect x="643" y="78.8" width="3" height="6.2" fill="#f00"/>
<rect x="650" y="78.8" width="1" height="11.2" fill="#00f"/>
<rect x="649" y="83.5" width="3" height="1.0" fill="#00f"/>
<rect x="656" y="79.4" width="1" height="14.4" fill="#00f"/>
<rect x="655" y="82.5" width="3" height="2.5" fill="#00f"/>
<rect x="662" y="79.4" width="1" height="10.6" fill="#00f"/>
<rect x="661" y="83.8" width="3" height="3.8" fill="#00f"/>
<rect x="668" y="79.4" width="1" height="10.6" fill="#00f"/>
<rect x="667" y="85.0" width="3" height="5.0" fill="#00f"/>
<rect x="674" y="79.4" width="1" height="10.6" fill="#f00"/>
<rect x="673" y="83.8" width="3" height="6.2" fill="#f00"/>
<rect x="680" y="82.9" width="1" height="10.6" fill="#00f"/>
<rect x="679" y="84.1" width="3" height="4.4" fill="#00f"/>
<rect x="686" y="82.9" width="1" height="11.2" fill="#00f"/>
<rect x="685" y="86.0" width="3" height="8.1" fill="#00f"/>
<rect x="692" y="84.1" width="1" height="9.4" fill="#f00"/>
<rect x="691" y="86.0" width="3" height="3.8" fill="#f00"/>
<rect x="698" y="89.1" width="1" height="14.4" fill="#00f"/>
<rect x="697" y="89.1" width="3" height="9.4" fill="#00f"/>
<rect x="704" y="89.8" width="1" height="18.8" fill="#f00"/>
<rect x="703" y="92.9" width="3" height="5.6" fill="#f00"/>
<rect x="710" y="89.1" width="1" height="10.0" fill="#00f"/>
<rect x="709" y="93.0" width="3" height="1.0" fill="#00f"/>
<rect x="716" y="92.9" width="1" height="10.6" fill="#00f"/>
<rect x="715" y="93.0" width="3" height="1.0" fill="#00f"/>
<rect x="722" y="93.5" width="1" height="15.0" fill="#00f"/>
<rect x="721" y="97.9" width="3" height="5.6" fill="#00f"/>
<rect x="728" y="99.1" width="1" height="18.8" fill="#00f"/>
<rect x="727" y="102.9" width="3" height="10.0" fill="#00f"/>
<rect x="734" y="102.9" width="1" height="10.0" fill="#00f"/>
<rect x="733" y="112.4" width="3" height="1.0" fill="#00f"/>
<rect x="740" y="102.9" width="1" height="20.0" fill="#00f"/>
<rect x="739" y="107.9" width="3" height="10.0" fill="#00f"/>
<rect x="746" y="103.5" width="1" height="24.4" fill="#f00"/>
<rect x="745" y="103.5" width="3" height="14.4" fill="#f00"/>
<rect x="752" y="103.5" width="1" height="9.4" fill="#00f"/>
<rect x="751" y="103.5" width="3" height="5.0" fill="#00f"/>
<rect x="758" y="107.9" width="1" height="10.0" fill="#00f"/>
<rect x="757" y="107.9" width="3" height="5.0" fill="#00f"/>
<rect x="764" y="112.2" width="1" height="19.4" fill="#00f"/>
<rect x="763" y="117.2" width="3" height="10.6" fill="#00f"/>
<rect x="770" y="122.2" width="1" height="19.4" fill="#00f"/>
<rect x="769" y="122.2" width="3" height="9.4" fill="#00f"/>
<rect x="776" y="127.2" width="1" height="19.4" fill="#00f"/>
<rect x="775" y="131.1" width="3" height="1.0" fill="#00f"/>
<rect x="782" y="122.2" width="1" height="14.4" fill="#00f"/>
<rect x="781" y="131.1" width="3" height="1.0" fill="#00f"/>
<rect x="788" y="127.2" width="1" height="19.4" fill="#00f"/>
<rect x="787" y="127.2" width="3" height="14.4" fill="#00f"/>
<rect x="794" y="136.0" width="1" height="10.6" fill="#00f"/>
<rect x="793" y="141.1" width="3" height="1.0" fill="#00f"/>
<rect x="800" y="122.2" width="1" height="19.4" fill="#f00"/>
<rect x="799" y="131.0" width="3" height="10.6" fill="#f00"/>
<rect x="806" y="117.2" width="1" height="19.4" fill="#f00"/>
<rect x="805" y="122.2" width="3" height="9.4" fill="#f00"/>
<rect x="812" y="117.2" width="1" height="13.8" fill="#f00"/>
<rect x="811" y="122.2" width="3" height="5.6" fill="#f00"/>
<rect x="818" y="112.2" width="1" height="15.6" fill="#f00"/>
<rect x="817" y="117.2" width="3" height="5.6" fill="#f00"/>
<rect x="824" y="112.9" width="1" height="15.0" fill="#00f"/>
<rect x="823" y="117.0" width="3" height="1.0" fill="#00f"/>
<rect x="830" y="103.5" width="1" height="20.0" fill="#f00"/>
<rect x="829" y="112.2" width="3" height="10.0" fill="#f00"/>
<rect x="836" y="92.9" width="1" height="24.4" fill="#f00"/>
<rect x="835" y="92.9" width="3" height="20.6" fill="#f00"/>
<rect x="842" y="89.1" width="1" height="14.4" fill="#00f"/>
<rect x="841" y="93.0" width="3" height="1.0" fill="#00f"/>
<rect x="848" y="89.1" width="1" height="9.4" fill="#00f"/>
<rect x="847" y="93.0" width="3" height="1.0" fill="#00f"/>
<rect x="854" y="92.9" width="1" height="15.6" fill="#00f"/>
<rect x="853" y="92.9" width="3" height="10.6" fill="#00f"/>
<rect x="860" y="92.9" width="1" height="15.6" fill="#f00"/>
<rect x="859" y="97.9" width="3" height="8.1" fill="#f00"/>
<rect x="866" y="88.5" width="1" height="20.0" fill="#f00"/>
<rect x="865" y="89.1" width="3" height="9.4" fill="#f00"/>
<rect x="872" y="89.1" width="1" height="14.4" fill="#00f"/>
<rect x="871" y="89.1" width="3" height="9.4" fill="#00f"/>
<rect x="878" y="97.2" width="1" height="11.2" fill="#00f"/>
<rect x="877" y="97.6" width="3" height="1.0" fill="#00f"/>
<rect x="884" y="89.1" width="1" height="10.6" fill="#f00"/>
<rect x="883" y="92.9" width="3" height="5.6" fill="#f00"/>
<rect x="890" y="92.9" width="1" height="15.6" fill="#00f"/>
<rect x="889" y="92.9" width="3" height="15.6" fill="#00f"/>
<rect x="896" y="103.5" width="1" height="8.8" fill="#00f"/>
<rect x="895" y="108.2" width="3" height="1.0" fill="#00f"/>
<rect x="902" y="93.5" width="1" height="15.0" fill="#f00"/>
<rect x="901" y="97.9" width="3" height="4.4" fill="#f00"/>
<rect x="908" y="92.9" width="1" height="10.6" fill="#00f"/>
<rect x="907" y="92.9" width="3" height="5.6" fill="#00f"/>
<rect x="914" y="97.2" width="1" height="8.8" fill="#00f"/>
<rect x="913" y="98.2" width="3" height="1.0" fill="#00f"/>
<rect x="920" y="97.2" width="1" height="15.0" fill="#00f"/>
<rect x="919" y="98.2" width="3" height="1.0" fill="#00f"/>
<rect x="926" y="97.9" width="1" height="16.9" fill="#00f"/>
<rect x="925" y="97.9" width="3" height="10.6" fill="#00f"/>
<rect x="932" y="107.9" width="1" height="20.0" fill="#00f"/>
<rect x="931" y="107.9" width="3" height="20.0" fill="#00f"/>
<rect x="938" y="122.2" width="1" height="14.4" fill="#00f"/>
<rect x="937" y="127.0" width="3" height="1.0" fill="#00f"/>
<rect x="944" y="108.1" width="1" height="19.4" fill="#f00"/>
<rect x="943" y="111.9" width="3" height="15.6" fill="#f00"/>
<rect x="950" y="112.5" width="1" height="15.0" fill="#00f"/>
<rect x="949" y="112.5" width="3" height="10.0" fill="#00f"/>
<rect x="956" y="117.5" width="1" height="14.4" fill="#00f"/>
<rect x="955" y="122.5" width="3" height="5.0" fill="#00f"/>
<rect x="962" y="122.5" width="1" height="9.4" fill="#00f"/>
<rect x="961" y="127.2" width="3" height="1.0" fill="#00f"/>
<rect x="968" y="122.5" width="1" height="13.8" fill="#00f"/>
<rect x="967" y="126.9" width="3" height="5.0" fill="#00f"/>
<rect x="974" y="126.9" width="1" height="15.0" fill="#00f"/>
<rect x="973" y="131.2" width="3" height="5.0" fill="#00f"/>
<rect x="980" y="131.2" width="1" height="19.4" fill="#00f"/>
<rect x="979" y="141.2" width="3" height="5.0" fill="#00f"/>
<rect x="986" y="141.2" width="1" height="28.8" fill="#00f"/>
<rect x="985" y="146.2" width="3" height="4.4" fill="#00f"/>
<rect x="992" y="136.2" width="1" height="19.4" fill="#f00"/>
<rect x="991" y="146.2" width="3" height="4.4" fill="#f00"/>
<rect x="998" y="141.2" width="1" height="19.4" fill="#00f"/>
<rect x="997" y="146.2" width="3" height="4.4" fill="#00f"/>
<rect x="1004" y="146.2" width="1" height="19.4" fill="#00f"/>
<rect x="1003" y="150.0" width="3" height="10.6" fill="#00f"/>
<rect x="1010" y="155.0" width="1" height="29.6" fill="#00f"/>
<rect x="1009" y="165.0" width="3" height="19.6" fill="#00f"/>
<rect x="1016" y="160.0" width="1" height="28.4" fill="#f00"/>
<rect x="1015" y="174.0" width="3" height="10.6" fill="#f00"/>
<rect x="1022" y="169.0" width="1" height="15.6" fill="#00f"/>
<rect x="1021" y="174.0" width="3" height="5.6" fill="#00f"/>
<rect x="1028" y="179.0" width="1" height="47.5" fill="#00f"/>
<rect x="1027" y="179.0" width="3" height="43.8" fill="#00f"/>
<rect x="1034" y="202.8" width="1" height="23.8" fill="#f00"/>
<rect x="1033" y="207.1" width="3" height="15.6" fill="#f00"/>
<rect x="1040" y="197.8" width="1" height="43.8" fill="#00f"/>
<rect x="1039" y="207.1" width="3" height="29.4" fill="#00f"/>
<rect x="1046" y="207.1" width="1" height="29.4" fill="#f00"/>
<rect x="1045" y="212.1" width="3" height="20.0" fill="#f00"/>
<rect x="1052" y="207.1" width="1" height="24.4" fill="#00f"/>
<rect x="1051" y="212.1" width="3" height="14.4" fill="#00f"/>
<rect x="1058" y="217.1" width="1" height="14.4" fill="#f00"/>
<rect x="1057" y="221.5" width="3" height="5.0" fill="#f00"/>
<rect x="1064" y="207.1" width="1" height="19.4" fill="#00f"/>
<rect x="1063" y="222.1" width="3" height="4.4" fill="#00f"/>
<rect x="1070" y="207.1" width="1" height="19.4" fill="#f00"/>
<rect x="1069" y="221.5" width="3" height="1.0" fill="#f00"/>
<rect x="1076" y="193.4" width="1" height="29.4" fill="#f00"/>
<rect x="1075" y="193.4" width="3" height="29.4" fill="#f00"/>
<rect x="1082" y="174.0" width="1" height="19.4" fill="#f00"/>
<rect x="1081" y="179.0" width="3" height="14.4" fill="#f00"/>
<rect x="1088" y="175.9" width="1" height="22.5" fill="#00f"/>
<rect x="1087" y="179.0" width="3" height="14.4" fill="#00f"/>
<rect x="1094" y="184.0" width="1" height="14.4" fill="#f00"/>
<rect x="1093" y="188.4" width="3" height="5.0" fill="#f00"/>
<rect x="1100" y="188.4" width="1" height="38.1" fill="#00f"/>
<rect x="1099" y="188.4" width="3" height="38.1" fill="#00f"/>
</g>
<g id="vol" fill="#009000">
<rect x="1" y="337" width="3" height="2"/>
<rect x="7" y="337" width="3" height="2"/>
<rect x="13" y="337" width="3" height="2"/>
<rect x="19" y="338" width="3" height="1"/>
<rect x="31" y="334" width="3" height="5"/>
<rect x="37" y="272" width="3" height="67"/>
<rect x="43" y="279" width="3" height="60"/>
<rect x="49" y="298" width="3" height="41"/>
<rect x="55" y="315" width="3" height="24"/>
<rect x="61" y="315" width="3" height="24"/>
<rect x="67" y="278" width="3" height="61"/>
<rect x="73" y="312" width="3" height="27"/>
<rect x="79" y="303" width="3" height="36"/>
<rect x="85" y="295" width="3" height="44"/>
<rect x="91" y="324" width="3" height="15"/>
<rect x="97" y="321" width="3" height="18"/>
<rect x="103" y="327" width="3" height="12"/>
<rect x="109" y="313" width="3" height="26"/>
<rect x="115" y="318" width="3" height="21"/>
<rect x="121" y="317" width="3" height="22"/>
<rect x="127" y="322" width="3" height="17"/>
<rect x="133" y="327" width="3" height="12"/>
<rect x="139" y="320" width="3" height="19"/>
<rect x="145" y="306" width="3" height="33"/>
<rect x="151" y="315" width="3" height="24"/>
<rect x="157" y="317" width="3" height="22"/>
<rect x="163" y="325" width="3" height="14"/>
<rect x="169" y="312" width="3" height="27"/>
<rect x="175" y="329" width="3" height="10"/>
<rect x="181" y="315" width="3" height="24"/>
<rect x="187" y="326" width="3" height="13"/>
<rect x="193" y="333" width="3" height="6"/>
<rect x="199" y="328" width="3" height="11"/>
<rect x="205" y="334" width="3" height="5"/>
<rect x="211" y="331" width="3" height="8"/>
<rect x="217" y="329" width="3" height="10"/>
<rect x="223" y="336" width="3" height="3"/>
<rect x="229" y="333" width="3" height="6"/>
<rect x="235" y="335" width="3" height="4"/>
<rect x="241" y="336" width="3" height="3"/>
<rect x="247" y="336" width="3" height="3"/>
<rect x="253" y="336" width="3" height="3"/>
<rect x="259" y="326" width="3" height="13"/>
<rect x="265" y="330" width="3" height="9"/>
<rect x="271" y="336" width="3" height="3"/>
<rect x="277" y="336" width="3" height="3"/>
<rect x="283" y="333" width="3" height="6"/>
<rect x="289" y="311" width="3" height="28"/>
<rect x="295" y="309" width="3" height="30"/>
<rect x="301" y="325" width="3" height="14"/>
<rect x="307" y="330" width="3" height="9"/>
<rect x="313" y="328" width="3" height="11"/>
<rect x="319" y="327" width="3" height="12"/>
<rect x="325" y="315" width="3" height="24"/>
<rect x="331" y="324" width="3" height="15"/>
<rect x="337" y="333" width="3" height="6"/>
<rect x="343" y="325" width="3" height="14"/>
<rect x="349" y="326" width="3" height="13"/>
<rect x="355" y="326" width="3" height="13"/>
<rect x="361" y="320" width="3" height="19"/>
<rect x="367" y="327" width="3" height="12"/>
<rect x="373" y="319" width="3" height="20"/>
<rect x="379" y="309" width="3" height="30"/>
<rect x="385" y="297" width="3" height="42"/>
<rect x="391" y="307" width="3" height="32"/>
<rect x="397" y="314" width="3" height="25"/>
<rect x="403" y="326" width="3" height="13"/>
<rect x="409" y="323" width="3" height="16"/>
<rect x="415" y="324" width="3" height="15"/>
<rect x="421" y="327" width="3" height="12"/>
<rect x="427" y="322" width="3" height="17"/>
<rect x="433" y="310" width="3" height="29"/>
<rect x="439" y="313" width="3" height="26"/>
<rect x="445" y="324" width="3" height="15"/>
<rect x="451" y="315" width="3" height="24"/>
<rect x="457" y="331" width="3" height="8"/>
<rect x="463" y="320" width="3" height="19"/>
<rect x="469" y="288" width="3" height="51"/>
<rect x="475" y="316" width="3" height="23"/>
<rect x="487" y="323" width="3" height="16"/>
<rect x="493" y="312" width="3" height="27"/>
<rect x="499" y="329" width="3" height="10"/>
<rect x="505" y="320" width="3" height="19"/>
<rect x="511" y="306" width="3" height="33"/>
<rect x="517" y="286" width="3" height="53"/>
<rect x="523" y="311" width="3" height="28"/>
<rect x="529" y="316" width="3" height="23"/>
<rect x="535" y="324" width="3" height="15"/>
<rect x="541" y="319" width="3" height="20"/>
<rect x="547" y="324" width="3" height="15"/>
<rect x="553" y="332" width="3" height="7"/>
<rect x="559" y="332" width="3" height="7"/>
<rect x="565" y="323" width="3" height="16"/>
<rect x="571" y="330" width="3" height="9"/>
<rect x="577" y="328" width="3" height="11"/>
<rect x="583" y="334" width="3" height="5"/>
<rect x="589" y="329" width="3" height="10"/>
<rect x="595" y="327" width="3" height="12"/>
<rect x="601" y="333" width="3" height="6"/>
<rect x="607" y="334" width="3" height="5"/>
<rect x="613" y="330" width="3" height="9"/>
<rect x="619" y="326" width="3" height="13"/>
<rect x="625" y="336" width="3" height="3"/>
<rect x="631" y="337" width="3" height="2"/>
<rect x="637" y="334" width="3" height="5"/>
<rect x="643" y="335" width="3" height="4"/>
<rect x="649" y="334" width="3" height="5"/>
<rect x="655" y="332" width="3" height="7"/>
<rect x="661" y="337" width="3" height="2"/>
<rect x="667" y="334" width="3" height="5"/>
<rect x="673" y="336" width="3" height="3"/>
<rect x="679" y="336" width="3" height="3"/>
<rect x="685" y="335" width="3" height="4"/>
<rect x="691" y="336" width="3" height="3"/>
<rect x="697" y="329" width="3" height="10"/>
<rect x="703" y="320" width="3" height="19"/>
<rect x="709" y="334" width="3" height="5"/>
<rect x="715" y="334" width="3" height="5"/>
<rect x="721" y="327" width="3" height="12"/>
<rect x="727" y="330" width="3" height="9"/>
<rect x="733" y="333" width="3" height="6"/>
<rect x="739" y="325" width="3" height="14"/>
<rect x="745" y="326" width="3" height="13"/>
<rect x="751" y="335" width="3" height="4"/>
<rect x="757" y="335" width="3" height="4"/>
<rect x="763" y="330" width="3" height="9"/>
<rect x="769" y="329" width="3" height="10"/>
<rect x="775" y="328" width="3" height="11"/>
<rect x="781" y="331" width="3" height="8"/>
<rect x="787" y="328" width="3" height="11"/>
<rect x="793" y="327" width="3" height="12"/>
<rect x="799" y="328" width="3" height="11"/>
<rect x="805" y="331" width="3" height="8"/>
<rect x="811" y="334" width="3" height="5"/>
<rect x="817" y="331" width="3" height="8"/>
<rect x="823" y="330" width="3" height="9"/>
<rect x="829" y="327" width="3" height="12"/>
<rect x="835" y="319" width="3" height="20"/>
<rect x="841" y="330" width="3" height="9"/>
<rect x="847" y="332" width="3" height="7"/>
<rect x="853" y="326" width="3" height="13"/>
<rect x="859" y="333" width="3" height="6"/>
<rect x="865" y="328" width="3" height="11"/>
<rect x="871" y="333" width="3" height="6"/>
<rect x="877" y="334" width="3" height="5"/>
<rect x="883" y="333" width="3" height="6"/>
<rect x="889" y="335" width="3" height="4"/>
<rect x="895" y="334" width="3" height="5"/>
<rect x="901" y="332" width="3" height="7"/>
<rect x="907" y="335" width="3" height="4"/>
<rect x="913" y="336" width="3" height="3"/>
<rect x="919" y="337" width="3" height="2"/>
<rect x="925" y="329" width="3" height="10"/>
<rect x="931" y="318" width="3" height="21"/>
<rect x="937" y="319" width="3" height="20"/>
<rect x="943" y="326" width="3" height="13"/>
<rect x="949" y="327" width="3" height="12"/>
<rect x="955" y="326" width="3" height="13"/>
<rect x="961" y="326" width="3" height="13"/>
<rect x="967" y="326" width="3" height="13"/>
<rect x="973" y="322" width="3" height="17"/>
<rect x="979" y="312" width="3" height="27"/>
<rect x="985" y="296" width="3" height="43"/>
<rect x="991" y="325" width="3" height="14"/>
<rect x="997" y="325" width="3" height="14"/>
<rect x="1003" y="319" width="3" height="20"/>
<rect x="1009" y="310" width="3" height="29"/>
<rect x="1015" y="318" width="3" height="21"/>
<rect x="1021" y="327" width="3" height="12"/>
<rect x="1027" y="305" width="3" height="34"/>
<rect x="1033" y="307" width="3" height="32"/>
<rect x="1039" y="316" width="3" height="23"/>
<rect x="1045" y="323" width="3" height="16"/>
<rect x="1051" y="319" width="3" height="20"/>
<rect x="1057" y="323" width="3" height="16"/>
<rect x="1063" y="327" width="3" height="12"/>
<rect x="1069" y="329" width="3" height="10"/>
<rect x="1075" y="322" width="3" height="17"/>
<rect x="1081" y="324" width="3" height="15"/>
<rect x="1087" y="329" width="3" height="10"/>
<rect x="1093" y="331" width="3" height="8"/>
<rect x="1099" y="323" width="3" height="16"/>
<rect x="1105" y="322" width="1" height="17"/>
</g>
<rect x="0" y="339" width="1109" height="1" fill="#000"/>
<g id="macd">
<rect x="0" y="389" width="1106" height="1" fill="#808080"/>
<rect x="2" y="388.4" width="1" height="0.6" fill="#f00"/>
<rect x="14" y="390" width="1" height="1.5" fill="#f00"/>
<rect x="20" y="390" width="1" height="2.0" fill="#f00"/>
<rect x="26" y="390" width="1" height="2.6" fill="#f00"/>
<rect x="32" y="390" width="1" height="3.5" fill="#f00"/>
<rect x="38" y="390" width="1" height="1.9" fill="#f00"/>
<rect x="44" y="390" width="1" height="0.6" fill="#f00"/>
<rect x="56" y="387.6" width="1" height="1.4" fill="#f00"/>
<rect x="62" y="386.7" width="1" height="2.3" fill="#f00"/>
<rect x="68" y="387.0" width="1" height="2.0" fill="#f00"/>
<rect x="74" y="387.0" width="1" height="2.0" fill="#f00"/>
<rect x="80" y="386.8" width="1" height="2.2" fill="#f00"/>
<rect x="86" y="386.6" width="1" height="2.4" fill="#f00"/>
<rect x="92" y="386.3" width="1" height="2.7" fill="#f00"/>
<rect x="98" y="386.5" width="1" height="2.5" fill="#f00"/>
<rect x="104" y="386.7" width="1" height="2.3" fill="#f00"/>
<rect x="110" y="386.3" width="1" height="2.7" fill="#f00"/>
<rect x="116" y="386.2" width="1" height="2.8" fill="#f00"/>
<rect x="122" y="386.2" width="1" height="2.8" fill="#f00"/>
<rect x="128" y="386.0" width="1" height="3.0" fill="#f00"/>
<rect x="134" y="385.4" width="1" height="3.6" fill="#f00"/>
<rect x="140" y="384.8" width="1" height="4.2" fill="#f00"/>
<rect x="146" y="385.7" width="1" height="3.3" fill="#f00"/>
<rect x="152" y="386.8" width="1" height="2.2" fill="#f00"/>
<rect x="158" y="387.1" width="1" height="1.9" fill="#f00"/>
<rect x="164" y="387.5" width="1" height="1.5" fill="#f00"/>
<rect x="170" y="386.8" width="1" height="2.2" fill="#f00"/>
<rect x="176" y="386.1" width="1" height="2.9" fill="#f00"/>
<rect x="182" y="385.6" width="1" height="3.4" fill="#f00"/>
<rect x="188" y="385.2" width="1" height="3.8" fill="#f00"/>
<rect x="194" y="385.2" width="1" height="3.8" fill="#f00"/>
<rect x="200" y="386.4" width="1" height="2.6" fill="#f00"/>
<rect x="206" y="387.6" width="1" height="1.4" fill="#f00"/>
<rect x="224" y="390" width="1" height="0.8" fill="#f00"/>
<rect x="266" y="390" width="1" height="1.1" fill="#f00"/>
<rect x="272" y="390" width="1" height="0.9" fill="#f00"/>
<rect x="278" y="390" width="1" height="1.0" fill="#f00"/>
<rect x="284" y="390" width="1" height="2.3" fill="#f00"/>
<rect x="290" y="390" width="1" height="4.0" fill="#f00"/>
<rect x="296" y="390" width="1" height="4.2" fill="#f00"/>
<rect x="302" y="390" width="1" height="4.2" fill="#f00"/>
<rect x="308" y="390" width="1" height="4.2" fill="#f00"/>
<rect x="314" y="390" width="1" height="4.0" fill="#f00"/>
<rect x="320" y="390" width="1" height="3.7" fill="#f00"/>
<rect x="326" y="390" width="1" height="3.2" fill="#f00"/>
<rect x="332" y="390" width="1" height="2.6" fill="#f00"/>
<rect x="338" y="390" width="1" height="2.4" fill="#f00"/>
<rect x="344" y="390" width="1" height="2.5" fill="#f00"/>
<rect x="350" y="390" width="1" height="1.7" fill="#f00"/>
<rect x="356" y="390" width="1" height="1.6" fill="#f00"/>
<rect x="368" y="387.9" width="1" height="1.1" fill="#f00"/>
<rect x="374" y="385.7" width="1" height="3.3" fill="#f00"/>
<rect x="380" y="383.8" width="1" height="5.2" fill="#f00"/>
<rect x="386" y="382.4" width="1" height="6.6" fill="#f00"/>
<rect x="392" y="381.5" width="1" height="7.5" fill="#f00"/>
<rect x="398" y="381.2" width="1" height="7.8" fill="#f00"/>
<rect x="404" y="381.7" width="1" height="7.3" fill="#f00"/>
<rect x="410" y="382.8" width="1" height="6.2" fill="#f00"/>
<rect x="416" y="383.7" width="1" height="5.3" fill="#f00"/>
<rect x="422" y="384.4" width="1" height="4.6" fill="#f00"/>
<rect x="428" y="384.7" width="1" height="4.3" fill="#f00"/>
<rect x="434" y="385.1" width="1" height="3.9" fill="#f00"/>
<rect x="440" y="386.8" width="1" height="2.2" fill="#f00"/>
<rect x="452" y="390" width="1" height="1.6" fill="#f00"/>
<rect x="458" y="390" width="1" height="2.6" fill="#f00"/>
<rect x="464" y="390" width="1" height="3.6" fill="#f00"/>
<rect x="470" y="390" width="1" height="2.9" fill="#f00"/>
<rect x="476" y="390" width="1" height="1.7" fill="#f00"/>
<rect x="482" y="390" width="1" height="1.7" fill="#f00"/>
<rect x="494" y="388.4" width="1" height="0.6" fill="#f00"/>
<rect x="500" y="388.4" width="1" height="0.6" fill="#f00"/>
<rect x="506" y="390" width="1" height="0.9" fill="#f00"/>
<rect x="512" y="390" width="1" height="3.7" fill="#f00"/>
<rect x="518" y="390" width="1" height="5.3" fill="#f00"/>
<rect x="524" y="390" width="1" height="4.6" fill="#f00"/>
<rect x="530" y="390" width="1" height="4.6" fill="#f00"/>
<rect x="536" y="390" width="1" height="6.1" fill="#f00"/>
<rect x="542" y="390" width="1" height="6.3" fill="#f00"/>
<rect x="548" y="390" width="1" height="5.3" fill="#f00"/>
<rect x="554" y="390" width="1" height="4.1" fill="#f00"/>
<rect x="560" y="390" width="1" height="3.1" fill="#f00"/>
<rect x="566" y="390" width="1" height="0.8" fill="#f00"/>
<rect x="584" y="388.3" width="1" height="0.7" fill="#f00"/>
<rect x="602" y="390" width="1" height="0.8" fill="#f00"/>
<rect x="608" y="390" width="1" height="1.1" fill="#f00"/>
<rect x="614" y="390" width="1" height="1.2" fill="#f00"/>
<rect x="620" y="390" width="1" height="1.2" fill="#f00"/>
<rect x="632" y="388.3" width="1" height="0.7" fill="#f00"/>
<rect x="638" y="388.1" width="1" height="0.9" fill="#f00"/>
<rect x="644" y="388.3" width="1" height="0.7" fill="#f00"/>
<rect x="656" y="390" width="1" height="0.6" fill="#f00"/>
<rect x="662" y="390" width="1" height="1.1" fill="#f00"/>
<rect x="668" y="390" width="1" height="1.4" fill="#f00"/>
<rect x="674" y="390" width="1" height="1.2" fill="#f00"/>
<rect x="680" y="390" width="1" height="1.0" fill="#f00"/>
<rect x="686" y="390" width="1" height="1.4" fill="#f00"/>
<rect x="692" y="390" width="1" height="2.0" fill="#f00"/>
<rect x="698" y="390" width="1" height="2.1" fill="#f00"/>
<rect x="704" y="390" width="1" height="1.5" fill="#f00"/>
<rect x="710" y="390" width="1" height="1.5" fill="#f00"/>
<rect x="716" y="390" width="1" height="2.0" fill="#f00"/>
<rect x="722" y="390" width="1" height="2.8" fill="#f00"/>
<rect x="728" y="390" width="1" height="3.4" fill="#f00"/>
<rect x="734" y="390" width="1" height="3.9" fill="#f00"/>
<rect x="740" y="390" width="1" height="4.4" fill="#f00"/>
<rect x="746" y="390" width="1" height="3.5" fill="#f00"/>
<rect x="752" y="390" width="1" height="2.8" fill="#f00"/>
<rect x="758" y="390" width="1" height="2.3" fill="#f00"/>
<rect x="764" y="390" width="1" height="3.0" fill="#f00"/>
<rect x="770" y="390" width="1" height="4.0" fill="#f00"/>
<rect x="776" y="390" width="1" height="4.7" fill="#f00"/>
<rect x="782" y="390" width="1" height="5.0" fill="#f00"/>
<rect x="788" y="390" width="1" height="4.9" fill="#f00"/>
<rect x="794" y="390" width="1" height="4.3" fill="#f00"/>
<rect x="800" y="390" width="1" height="3.6" fill="#f00"/>
<rect x="806" y="390" width="1" height="2.2" fill="#f00"/>
<rect x="818" y="386.2" width="1" height="2.8" fill="#f00"/>
<rect x="824" y="384.9" width="1" height="4.1" fill="#f00"/>
<rect x="830" y="383.7" width="1" height="5.3" fill="#f00"/>
<rect x="836" y="381.7" width="1" height="7.3" fill="#f00"/>
<rect x="842" y="381.4" width="1" height="7.6" fill="#f00"/>
<rect x="848" y="380.8" width="1" height="8.2" fill="#f00"/>
<rect x="854" y="380.7" width="1" height="8.3" fill="#f00"/>
<rect x="860" y="381.1" width="1" height="7.9" fill="#f00"/>
<rect x="866" y="381.7" width="1" height="7.3" fill="#f00"/>
<rect x="872" y="382.5" width="1" height="6.5" fill="#f00"/>
<rect x="878" y="383.0" width="1" height="6.0" fill="#f00"/>
<rect x="884" y="383.7" width="1" height="5.3" fill="#f00"/>
<rect x="890" y="385.5" width="1" height="3.5" fill="#f00"/>
<rect x="896" y="386.6" width="1" height="2.4" fill="#f00"/>
<rect x="902" y="387.0" width="1" height="2.0" fill="#f00"/>
<rect x="908" y="387.0" width="1" height="2.0" fill="#f00"/>
<rect x="914" y="386.9" width="1" height="2.1" fill="#f00"/>
<rect x="920" y="386.7" width="1" height="2.3" fill="#f00"/>
<rect x="932" y="390" width="1" height="2.4" fill="#f00"/>
<rect x="938" y="390" width="1" height="3.8" fill="#f00"/>
<rect x="944" y="390" width="1" height="4.0" fill="#f00"/>
<rect x="950" y="390" width="1" height="4.1" fill="#f00"/>
<rect x="956" y="390" width="1" height="4.9" fill="#f00"/>
<rect x="962" y="390" width="1" height="4.9" fill="#f00"/>
<rect x="968" y="390" width="1" height="4.6" fill="#f00"/>
<rect x="974" y="390" width="1" height="4.4" fill="#f00"/>
<rect x="980" y="390" width="1" height="5.3" fill="#f00"/>
<rect x="986" y="390" width="1" height="6.2" fill="#f00"/>
<rect x="992" y="390" width="1" height="7.1" fill="#f00"/>
<rect x="998" y="390" width="1" height="7.4" fill="#f00"/>
<rect x="1004" y="390" width="1" height="7.4" fill="#f00"/>
<rect x="1010" y="390" width="1" height="8.9" fill="#f00"/>
<rect x="1016" y="390" width="1" height="8.9" fill="#f00"/>
<rect x="1022" y="390" width="1" height="8.5" fill="#f00"/>
<rect x="1028" y="390" width="1" height="12.0" fill="#f00"/>
<rect x="1034" y="390" width="1" height="13.3" fill="#f00"/>
<rect x="1040" y="390" width="1" height="15.1" fill="#f00"/>
<rect x="1046" y="390" width="1" height="13.8" fill="#f00"/>
<rect x="1052" y="390" width="1" height="12.5" fill="#f00"/>
<rect x="1058" y="390" width="1" height="10.7" fill="#f00"/>
<rect x="1064" y="390" width="1" height="9.0" fill="#f00"/>
<rect x="1070" y="390" width="1" height="5.4" fill="#f00"/>
<rect x="1082" y="385.4" width="1" height="3.6" fill="#f00"/>
<rect x="1088" y="383.2" width="1" height="5.8" fill="#f00"/>
<rect x="1094" y="381.3" width="1" height="7.7" fill="#f00"/>
<rect x="1100" y="383.8" width="1" height="5.2" fill="#f00"/>
<polyline points="0,392 12,395 27,396.7 34,399.6 41,397.5 51,395.5 61.5,392 76,391 92,389.4 106.6,389 123,385.9 141,382.4 151.7,383.8 164,383.8 178,380.7 192.7,376.2 205,377.7 217,379.7 225.5,381 246,379.7 256,380.3 266.5,382.2 280,382.5 292,386.9 306.6,389.4 321,391 335,391.6 345.6,393.5 356,393 368,390 378,384.8 388.6,379.7 401,375.6 419,374.2 433.7,372 444,373.6 452,377.7 462,381 483,381 493,378.7 501,378.7 507.5,380.7 515.7,386.5 528,388 536,392 544,394.5 554.6,394.5 560,393.5 568,392 586.6,390.6 605,392.4 621.5,392.4 627.6,390.6 642,390 654,391 666.6,392.4 683,392.4 697,395 711.7,395.5 724,397.5 740,403 748.6,402.3 758.8,402.3 773,407.4 785.5,410.5 795.7,412 802,412 812,408.4 820,404.7 828.5,402.3 838,395 850.5,390 864.8,386.5 883,383.4 897.6,385.3 920,384.4 930.4,388 938.6,392.4 948.9,393 957,396 973.5,399.8 990,406.4 1002,409.4 1012.4,415.6 1022.7,419.3 1028.8,425.8 1035,429 1041,434.6 1055.5,438.7 1065.7,439.6 1071.9,437 1080,429 1086,424.8 1094.4,419.7 1105.7,422.8" fill="none" stroke="#ff0" stroke-width="1" />
<polyline points="0,393 12,393.7 27,394 37,396.5 51,396 65.6,393.7 86,392.4 110.7,391 127,388 143.5,386.5 164,385.3 178,383.8 192.7,380.3 205,379.3 221,379.3 225.5,380.3 256,380.3 270.5,381.4 280,381.5 288,381.8 300.5,384.2 321,387.3 337,389.6 349.7,391.6 370,391 382.5,388.5 394.8,385.3 407,381.8 423.5,378 437.8,375.2 448,375.2 456,377 468.6,377.7 474.7,379.3 507.5,379.3 517.8,381.4 536,385.9 552.6,390.4 560,390.4 566,391.6 642,391 650,390.4 666.6,391 689,391.6 703.5,393.7 724,394.5 740,398.6 756.8,399.8 773,402.9 785.5,405.3 797.7,408.4 820,408.4 830.5,406.4 842,401 856.6,396.7 871,392 887.4,388 905.8,386.9 932.5,386.5 938.6,388.5 948.9,389 961,392 973.5,395.5 985.8,398.6 998,401 1010,405.3 1022.7,410.9 1035,415.6 1047,422.8 1059.6,429 1069.8,432.4 1078,432.4 1086,430 1094.4,427.5 1105.7,425.4" fill="none" stroke="#00f" stroke-width="1" />
</g>
<g id="stoch">
<rect x="0" y="480" width="1106" height="1" fill="#00f"/>
<rect x="0" y="529" width="1106" height="1" fill="#f00"/>
<polyline points="0,488.5 3,489 8.2,494 14.3,502.2 20.5,508.4 25.6,510.4 32.8,517.6 39,521.7 44,521.7 50.2,513.5 56.4,504.3 62.5,495.5 68.7,495.5 73.8,495.5 81,500.6 86,499.5 92.2,497 98.4,494.4 104.5,497 110.7,498.7 116.8,496 123,490 129,485.8 135.3,482.7 140.4,481.3 146.5,486.8 152.7,492 158.8,496.7 164,497 170,494 176.3,486.8 182.4,480.7 188.6,477.6 193.7,476.2 199.8,480.7 206,486.8 212,496 218.3,501.2 225.5,505.9 231.6,504.3 237.7,499.5 243.9,494 249,490 254,490 260.3,495 266.4,504.3 272.6,506.3 280,502 284,500.6 290.2,507.3 296.4,511.4 302.5,511 308.7,506.3 314.8,505.3 321,508.4 327,510.4 333.3,509.4 338.4,508.4 344.6,510.4 350.7,512.5 356.9,510.4 362,505.3 368,496 374.3,487.9 380.4,481.7 386.6,477.6 392.7,475.6 398.9,474 405,475.6 411,477.6 417.3,477.2 422.4,478.2 428.6,476.2 434.7,474.5 440.9,476.6 446,480.7 452,496 458.3,510.4 464.5,519.6 469.6,521.7 476.8,514.5 483,509 489,503.2 495.2,497 500.3,495.7 506.5,498 512.6,509.4 518.8,518.6 524,521.3 530,517.6 536,518.6 542.3,522.7 548.5,526.2 554.6,523.7 560,521.5 566,516 572.3,512.9 578.4,509.8 584.6,507.7 590.3,502.2 596.5,498 602.4,493.6 608.6,498.5 614.5,503.6 620.5,505.7 626.4,501.2 632.4,495.5 638.5,495.5 644.4,499.5 650.4,503.2 656.3,507 662.5,510 668.6,514.5 674.4,516.6 680.3,517.2 686.5,520.7 692.4,525.4 698.3,530.9 704.5,528.9 710.4,525.2 716.4,519.6 722.5,519.2 728.5,522.3 734.4,528.2 740.4,532.3 746.5,528.9 752.5,523.3 758.4,518 764.3,521 770.3,525.2 776.2,528.4 782.4,528.2 788.3,529.5 794.3,531.3 800.2,532.5 806,528.2 812,519 818.2,509 824.4,501.8 830,495 836,486.8 842.3,479 848.4,473.5 854.2,475.6 860.3,478.6 866.3,479.7 872.2,478.6 878.4,479.3 884.3,480.7 890.5,485.2 896.4,492 902.4,496.7 908.5,497.5 914.4,496 920.4,497.5 926.3,505.7 932.5,517.2 938.6,526.2 944.6,526.2 950.5,522.3 956.5,520 962.4,523 968.3,528.2 974.5,531.5 980.4,534.6 986.4,534.4 992.5,531.5 998.5,527.4 1004.4,527.4 1010.4,531.5 1016.5,534.4 1022.5,536 1028.4,536.4 1034.3,536.4 1040.3,538 1046.2,536 1052.4,535.4 1058.3,534 1064.3,534.4 1070.2,533.4 1076,528.9 1082,519.6 1088.2,509.4 1094.4,502.2 1100,505.7 1105.7,512" fill="none" stroke="#f00" stroke-width="1" />
<polyline points="0,490 3,492 8.2,504.3 14.3,509.4 20.5,511.4 26.6,512.5 32.8,528.9 39,520.7 44,511.4 50.2,501.2 56.4,496 62.5,489.3 68.7,499.5 74.8,497.5 81,506.3 86,495 92.2,492.4 98.4,496 104.5,503.2 110.7,497 116.8,488.9 123,481 128,483 134.2,482.7 140.4,478.6 146.5,494 152.7,497 157.8,498.7 164,497 170,487.9 176.3,481.7 182.4,476.6 188.6,474.5 193.7,474.5 200.9,492 206,494.4 212,502.2 218.3,506.3 225.5,507.7 231.6,498 236.7,492.6 242.9,491 248.4,484.4 254,490 260.3,510.4 266,511.4 272.6,498.5 280,501.8 284,503.2 290.2,518 296.4,511.4 302.5,503.2 308.7,504.3 314.8,509.4 321,512 326,508.4 332.3,506.3 338.4,511.4 344.6,513.5 350.7,511.4 356.9,505.7 362,496 368,485.8 374.3,480.7 380.4,477.6 386.6,474 392.7,476.2 398.9,473 405,476.6 411,481.3 416.3,476.6 422.4,477.6 428.6,474 434.7,472.5 440.9,482.7 447,494 452,513.5 458.3,525 464.5,522 470.6,514.5 476.8,507.7 483,504.3 489,497 494.6,491.4 500.3,496 506.5,507.3 512.6,526 517.8,522.7 524,515.5 529.6,514 536,526.8 542.3,528.9 548.5,523.7 554.6,521.3 560,518 566,512.9 572.3,510 578.4,507.3 584.6,508 590.3,490.3 596.5,495.7 602.4,495 608.6,505.7 614.5,510.4 620.5,502.2 626.4,488.5 632.4,496.7 638.5,500.2 644.4,503.2 650.4,508.8 656.3,510.4 662.5,511.4 668.6,520.3 674.4,516 680.3,515.5 686.5,530.3 692.4,530.5 698.3,532.5 704.5,523.3 710.4,519.6 716.4,515.5 722.5,522.7 728.5,529.5 734.4,532.5 740.4,534.6 746.5,519.2 752.5,516 758.4,518.2 764.3,528.4 770.3,530.3 776.2,527.2 782.4,526.4 788.3,531.5 794.3,535.4 800.2,529.9 806,518.6 812,509.8 818.2,501.8 824.4,494.6 830,488.7 836,476.6 842.3,473 848.4,472.5 854.2,479.7 860.3,481.3 866.3,475.6 872.2,478.6 878.4,481.3 884.3,480.7 890.5,492 896.4,501.2 902.4,496 908.5,495.5 914.4,497.5 920.4,501.8 926.3,517.2 932.5,531.3 938.6,529.5 944.6,517.6 950.5,520 956.5,524.4 962.4,527.2 968.3,532.5 974.5,534.6 980.4,537.5 986.4,531.3 992.5,525.4 998.5,525.4 1004.4,530.9 1010.4,538.5 1016.5,534 1022.5,536 1028.4,539.5 1034.3,535.6 1040.3,539 1046.2,533.6 1052.4,534.6 1058.3,533.4 1064.3,534.4 1070.2,532.5 1076,519.6 1082,506.3 1088.2,503.2 1094.4,498.7 1100,512.5 1105.7,525.4" fill="none" stroke="#00f" stroke-width="1" />
</g>
<rect x="1106" y="19" width="1" height="567" fill="#000"/>
<rect x="0" y="554" width="1170" height="1" fill="#000"/>
<rect x="8" y="554" width="1" height="5" fill="#000"/>
<rect x="62" y="554" width="1" height="5" fill="#000"/>
<rect x="158" y="554" width="1" height="5" fill="#000"/>
<rect x="254" y="554" width="1" height="5" fill="#000"/>
<rect x="350" y="554" width="1" height="5" fill="#000"/>
<rect x="446" y="554" width="1" height="5" fill="#000"/>
<rect x="554" y="554" width="1" height="5" fill="#000"/>
<rect x="650" y="554" width="1" height="5" fill="#000"/>
<rect x="746" y="554" width="1" height="5" fill="#000"/>
<rect x="842" y="554" width="1" height="5" fill="#000"/>
<rect x="938" y="554" width="1" height="5" fill="#000"/>
<rect x="1034" y="554" width="1" height="5" fill="#000"/>
<rect x="1107" y="37" width="5" height="1" fill="#000"/>
<text y="43.32" font-size="12" fill="#000"  xml:space="preserve"><tspan x="1114.36 1120.36 1128.03 1132.36 1138.36 1144.36" font-size="12">13,420</tspan></text>
<rect x="1107" y="74" width="5" height="1" fill="#000"/>
<text y="80.32" font-size="12" fill="#000"  xml:space="preserve"><tspan x="1114.36 1120.36 1128.03 1132.36 1138.36 1144.36" font-size="12">13,380</tspan></text>
<rect x="1107" y="112" width="5" height="1" fill="#000"/>
<text y="118.32" font-size="12" fill="#000"  xml:space="preserve"><tspan x="1114.36 1120.36 1128.03 1132.36 1138.36 1144.36" font-size="12">13,340</tspan></text>
<rect x="1107" y="150" width="5" height="1" fill="#000"/>
<text y="156.32" font-size="12" fill="#000"  xml:space="preserve"><tspan x="1114.36 1120.36 1128.03 1132.36 1138.36 1144.36" font-size="12">13,300</tspan></text>
<rect x="1107" y="188" width="5" height="1" fill="#000"/>
<text y="194.32" font-size="12" fill="#000"  xml:space="preserve"><tspan x="1114.36 1120.36 1128.03 1132.36 1138.36 1144.36" font-size="12">13,260</tspan></text>
<rect x="1107" y="226" width="5" height="1" fill="#000"/>
<text y="232.32" font-size="12" fill="#000"  xml:space="preserve"><tspan x="1114.36 1120.36 1128.03 1132.36 1138.36 1144.36" font-size="12">13,220</tspan></text>
<rect x="1107" y="272" width="5" height="1" fill="#000"/>
<text y="278.32" font-size="12" fill="#000"  xml:space="preserve"><tspan x="1114.36 1120.36 1126.36 1134.03 1138.36 1144.36" font-size="12">215.00</tspan></text>
<rect x="1107" y="309" width="5" height="1" fill="#000"/>
<text y="315.32" font-size="12" fill="#000"  xml:space="preserve"><tspan x="1114.36 1120.36 1128.03 1132.36 1138.36" font-size="12">95.00</tspan></text>
<rect x="1107" y="372" width="5" height="1" fill="#000"/>
<text y="378.32" font-size="12" fill="#000"  xml:space="preserve"><tspan x="1114.36 1120.36 1128.03 1132.36 1138.36" font-size="12">10.50</tspan></text>
<rect x="1107" y="409" width="5" height="1" fill="#000"/>
<text y="415.32" font-size="12" fill="#000"  xml:space="preserve"><tspan x="1115.70 1120.36 1126.36 1134.03 1138.36 1144.36" font-size="12">-12.00</tspan></text>
<rect x="1107" y="472" width="5" height="1" fill="#000"/>
<text y="478.32" font-size="12" fill="#000"  xml:space="preserve"><tspan x="1114.36 1120.36 1128.03 1132.36 1138.36" font-size="12">90.00</tspan></text>
<rect x="1107" y="509" width="5" height="1" fill="#000"/>
<text y="515.32" font-size="12" fill="#000"  xml:space="preserve"><tspan x="1114.36 1120.36 1128.03 1132.36 1138.36" font-size="12">45.00</tspan></text>
<text y="574.32" font-size="12" fill="#000"  xml:space="preserve"><tspan x="7.36 13.36 21.03 25.36 31.36" font-size="12">02:40</tspan></text>
<text y="574.32" font-size="12" fill="#000"  xml:space="preserve"><tspan x="61.36 67.36 75.03 79.36 85.36" font-size="12">09:20</tspan></text>
<text y="574.32" font-size="12" fill="#000"  xml:space="preserve"><tspan x="157.36 163.36 171.03 175.36 181.36" font-size="12">10:40</tspan></text>
<text y="574.32" font-size="12" fill="#000"  xml:space="preserve"><tspan x="253.36 259.36 267.03 271.36 277.36" font-size="12">12:00</tspan></text>
<text y="574.32" font-size="12" fill="#000"  xml:space="preserve"><tspan x="349.36 355.36 363.03 367.36 373.36" font-size="12">13:20</tspan></text>
<text y="574.32" font-size="12" fill="#000"  xml:space="preserve"><tspan x="445.36 451.36 459.03 463.36 469.36" font-size="12">14:40</tspan></text>
<text y="574.32" font-size="12" fill="#000"  xml:space="preserve"><tspan x="553.36 559.36 567.03 571.36 577.36" font-size="12">17:20</tspan></text>
<text y="574.32" font-size="12" fill="#000"  xml:space="preserve"><tspan x="649.36 655.36 663.03 667.36 673.36" font-size="12">18:40</tspan></text>
<text y="574.32" font-size="12" fill="#000"  xml:space="preserve"><tspan x="745.36 751.36 759.03 763.36 769.36" font-size="12">20:00</tspan></text>
<text y="574.32" font-size="12" fill="#000"  xml:space="preserve"><tspan x="841.36 847.36 855.03 859.36 865.36" font-size="12">21:20</tspan></text>
<text y="574.32" font-size="12" fill="#000"  xml:space="preserve"><tspan x="937.36 943.36 951.03 955.36 961.36" font-size="12">22:40</tspan></text>
<text y="574.32" font-size="12" fill="#000"  xml:space="preserve"><tspan x="1033.36 1039.36 1047.03 1051.36 1057.36" font-size="12">04/18</tspan></text>
<text y="32.32" font-size="12" fill="#000"  xml:space="preserve"><tspan x="0" >日経</tspan><tspan x="23.36 29.36 35.36 39.70 49.37 53.36 61.37 67.03 71.36 77.36 85.03 89.36 95.36 102.70 109.03 113.36" font-size="12">225mini 13/06( 5</tspan><tspan x="120" >分</tspan><tspan x="133.03 139.03 143.36 149.36 155.36 161.36 169.03 173.36 179.36 187.03 191.36 197.36 205.03 210.70 217.03 221.36 227.36 233.36 239.36 247.03 251.36 257.36 265.03 269.36 275.36 283.03 288.70" font-size="12">, 2013/04/16 - 2013/04/18 )</tspan></text>
<text y="32.32" font-size="12" fill="#000"  xml:space="preserve"><tspan x="314" >移動平均</tspan><tspan x="362.70 369.03 372.37 381.37 385.36 391.70 397.36 405.03 411.03 415.36 421.36 429.03 434.70" font-size="12">( Close, 75 )</tspan></text>
<text y="32.32" font-size="12" fill="#000"  xml:space="preserve"><tspan x="460" >移動平均</tspan><tspan x="508.70 515.03 518.37 527.37 531.36 537.70 543.36 551.03 557.03 561.36 567.36 575.03 580.70" font-size="12">( Close, 75 )</tspan></text>
<text y="32.32" font-size="12" fill="#000"  xml:space="preserve"><tspan x="606" >移動平均</tspan><tspan x="654.70 661.03 664.37 673.37 677.36 683.70 689.36 697.03 703.03 707.36 713.36 719.36 727.03 732.70" font-size="12">( Close, 150 )</tspan></text>
<text y="32.32" font-size="12" fill="#000"  xml:space="preserve"><tspan x="758" >一目均衡表</tspan><tspan x="818.70 825.03 829.36 837.03 843.03 847.36 853.36 861.03 867.03 871.36 877.36 885.03 890.70" font-size="12">( 9, 26, 52 )</tspan></text>
<text y="32.32" font-size="12" fill="#000"  xml:space="preserve"><tspan x="916" >移動平均</tspan><tspan x="964.70 971.03 974.37 983.37 987.36 993.70 999.36 1007.03 1013.03 1017.36 1023.36 1031.03 1036.70" font-size="12">( Close, 20 )</tspan></text>
<text y="45.32" font-size="12" fill="#000"  xml:space="preserve"><tspan x="0" >移動平均</tspan><tspan x="48.70 55.03 58.37 67.37 71.36 77.70 83.36 91.03 97.03 101.36 107.36 115.03 120.70" font-size="12">( Close, 10 )</tspan></text>
<text y="45.32" font-size="12" fill="#000"  xml:space="preserve"><tspan x="146" >移動平均</tspan><tspan x="194.70 201.03 204.37 213.37 217.36 223.70 229.36 237.03 243.03 247.36 255.03 260.70" font-size="12">( Close, 5 )</tspan></text>
<text y="45.32" font-size="12" fill="#000"  xml:space="preserve"><tspan x="286" >移動平均</tspan><tspan x="334.70 341.03 344.37 353.37 357.36 363.70 369.36 377.03 383.03 387.36 393.36 401.03 406.70" font-size="12">( Close, 25 )</tspan></text>
<text y="45.32" font-size="12" fill="#000"  xml:space="preserve"><tspan x="432" >移動平均</tspan><tspan x="480.70 487.03 490.37 499.37 503.36 509.70 515.36 523.03 529.03 533.36 539.36 547.03 552.70" font-size="12">( Close, 40 )</tspan></text>
<text y="267.32" font-size="12" fill="#000"  xml:space="preserve"><tspan x="0" >出来高</tspan></text>
<text y="367.32" font-size="12" fill="#000"  xml:space="preserve"><tspan x="0.3" textLength="23" lengthAdjust="spacingAndGlyphs">MACD</tspan><tspan x="24.70 31.03 35.36 41.36 49.03 55.03 59.36 65.36 73.03 79.03 83.36 91.03 96.70" font-size="12">( 12, 26, 9 )</tspan></text>
<text y="467.32" font-size="12" fill="#000"  xml:space="preserve"><tspan x="0" >スロー・ストキャスティクス</tspan><tspan x="156.70 163.03 167.36 173.36 181.03 187.03 191.36 199.03 205.03 209.36 215.36 223.03 229.03 233.36 239.36 247.03 252.70" font-size="12">( 14, 3, 80, 20 )</tspan></text>
<rect x="1109.5" y="337.5" width="39" height="13" fill="#fff" stroke="#000" stroke-width="1"/>
<text y="348.32" font-size="12" fill="#000"  xml:space="preserve"><tspan x="1112" font-family="'IPAGothic',monospace" >×</tspan><tspan x="1125.03 1129.36 1135.36 1141.36" font-size="12"> 100</tspan></text>
<rect x="1154.5" y="21.5" width="14" height="12" fill="#fff" stroke="#909090" stroke-width="1"/>
<polygon points="1156.5,25 1167.5,25 1162,31" fill="#707070" stroke="#000" stroke-width="1" shape-rendering="auto"/>
<rect x="1154.5" y="256.5" width="14" height="12" fill="#fff" stroke="#909090" stroke-width="1"/>
<polygon points="1156.5,260 1167.5,260 1162,266" fill="#707070" stroke="#000" stroke-width="1" shape-rendering="auto"/>
<rect x="1154.5" y="357.5" width="14" height="12" fill="#fff" stroke="#909090" stroke-width="1"/>
<polygon points="1156.5,361 1167.5,361 1162,367" fill="#707070" stroke="#000" stroke-width="1" shape-rendering="auto"/>
<rect x="1154.5" y="456.5" width="14" height="12" fill="#fff" stroke="#909090" stroke-width="1"/>
<polygon points="1156.5,460 1167.5,460 1162,466" fill="#707070" stroke="#000" stroke-width="1" shape-rendering="auto"/>
<g id="toolbar">
<rect x="0" y="0" width="1170" height="18" fill="#d9dade"/><rect x="0" y="18" width="1170" height="1" fill="#e6e7e9"/>
<rect x="0" y="0" width="11" height="14" fill="#e4e4e4"/><rect x="11" y="0" width="1" height="15" fill="#404040"/><rect x="0" y="14" width="12" height="1" fill="#404040"/>
<polygon points="-1,4.5 7,4.5 3,9.0" fill="#000" shape-rendering="auto"/>
<rect x="16" y="0" width="79" height="15" fill="#fff"/>
<rect x="16" y="0" width="1" height="15" fill="#c8c8c8"/>
<rect x="78" y="0" width="16" height="14" fill="#ececec"/>
<rect x="16" y="14" width="79" height="1" fill="#e8e8e8"/>
<polygon points="81.5,4.5 89.5,4.5 85.5,9.0" fill="#000" shape-rendering="auto"/>
<text y="10.82" font-size="12" fill="#000"  xml:space="preserve"><tspan x="19" >先物</tspan></text>
<rect x="97" y="0" width="114" height="15" fill="#fff"/>
<rect x="97" y="0" width="1" height="15" fill="#c8c8c8"/>
<rect x="194" y="0" width="16" height="14" fill="#ececec"/>
<rect x="97" y="14" width="114" height="1" fill="#e8e8e8"/>
<polygon points="197.5,4.5 205.5,4.5 201.5,9.0" fill="#000" shape-rendering="auto"/>
<text y="10.82" font-size="12" fill="#000"  xml:space="preserve"><tspan x="99.5" >日経</tspan><tspan x="122.86 128.86 134.86 139.20 148.87 152.86 160.87" font-size="12">225mini</tspan></text>
<rect x="213" y="0" width="87" height="15" fill="#fff"/>
<rect x="213" y="0" width="1" height="15" fill="#c8c8c8"/>
<rect x="283" y="0" width="16" height="14" fill="#ececec"/>
<rect x="213" y="14" width="87" height="1" fill="#e8e8e8"/>
<polygon points="286.5,4.5 294.5,4.5 290.5,9.0" fill="#000" shape-rendering="auto"/>
<text y="10.82" font-size="12" fill="#000"  xml:space="preserve"><tspan x="216.86 222.86 230.53 234.86 240.86" font-size="12">13/06</tspan></text>
<defs><linearGradient id="bg" x1="0" y1="0" x2="0" y2="1"><stop offset="0" stop-color="#f2f2f2"/><stop offset="1" stop-color="#cfcfcf"/></linearGradient></defs>
<rect x="306" y="0" width="20" height="15" fill="#d6e3f3"/>
<rect x="306" y="15" width="20" height="1" fill="#a9c4e4"/>
<text y="10.82" font-size="12" fill="#000"  xml:space="preserve"><tspan x="309.5" >足</tspan></text>
<rect x="328" y="0" width="24" height="15" fill="#e0e0e0"/><rect x="328" y="0" width="1" height="15" fill="#a0a0a0"/>
<text y="10.82" font-size="12" fill="#808080"  xml:space="preserve"><tspan x="343.86" font-size="12">1</tspan></text>
<rect x="351" y="0" width="13" height="13" fill="#d4d0c8"/>
<rect x="355" y="5" width="8" height="7" fill="#dedad3"/>
<rect x="363" y="0" width="1" height="13" fill="#404040"/><rect x="351" y="12" width="13" height="1" fill="#404040"/>
<line x1="351.5" y1="12.5" x2="363.5" y2="0" stroke="#000" stroke-width="1" shape-rendering="auto"/>
<polygon points="353,4 356.2,4 354.6,2" fill="#000" shape-rendering="auto"/>
<rect x="367" y="0" width="19" height="16" fill="#f2f2f2"/>
<rect x="368" y="0" width="17" height="15" fill="url(#bg)"/>
<rect x="384" y="0" width="1" height="14" fill="#6a6a6a"/>
<rect x="369" y="14" width="15" height="1" fill="#6a6a6a"/>
<text y="10.82" font-size="12" fill="#000"  xml:space="preserve"><tspan x="370" >日</tspan></text>
<rect x="387" y="0" width="19" height="16" fill="#f2f2f2"/>
<rect x="388" y="0" width="17" height="15" fill="url(#bg)"/>
<rect x="404" y="0" width="1" height="14" fill="#6a6a6a"/>
<rect x="389" y="14" width="15" height="1" fill="#6a6a6a"/>
<text y="10.82" font-size="12" fill="#000"  xml:space="preserve"><tspan x="390" >週</tspan></text>
<rect x="407" y="0" width="19" height="16" fill="#f2f2f2"/>
<rect x="408" y="0" width="17" height="15" fill="url(#bg)"/>
<rect x="424" y="0" width="1" height="14" fill="#6a6a6a"/>
<rect x="409" y="14" width="15" height="1" fill="#6a6a6a"/>
<text y="10.82" font-size="12" fill="#000"  xml:space="preserve"><tspan x="410" >月</tspan></text>
<rect x="427" y="0" width="18" height="15" fill="#c4c4c4"/><rect x="427" y="0" width="1" height="15" fill="#707070"/><rect x="444" y="0" width="1" height="15" fill="#e8e8e8"/><rect x="427" y="14" width="18" height="1" fill="#e8e8e8"/>
<text y="10.82" font-size="12" fill="#000"  xml:space="preserve"><tspan x="429.5" >分</tspan></text>
<rect x="447" y="0" width="19" height="16" fill="#f2f2f2"/>
<rect x="448" y="0" width="17" height="15" fill="url(#bg)"/>
<rect x="464" y="0" width="1" height="14" fill="#6a6a6a"/>
<rect x="449" y="14" width="15" height="1" fill="#6a6a6a"/>
<text y="10.82" font-size="12" fill="#000"  xml:space="preserve"><tspan x="452.03" font-size="12">T</tspan></text>
<rect x="476" y="0" width="20" height="15" fill="#d6e3f3"/>
<rect x="476" y="15" width="20" height="1" fill="#a9c4e4"/>
<text y="10.82" font-size="12" fill="#000"  xml:space="preserve"><tspan x="480" >分</tspan></text>
<rect x="497" y="0" width="39" height="15" fill="#fff"/><rect x="497" y="0" width="1" height="15" fill="#8c8c8c"/><rect x="497" y="15" width="39" height="1" fill="#f0f0f0"/>
<text y="10.82" font-size="12" fill="#000"  xml:space="preserve"><tspan x="513.36" font-size="12">5</tspan></text>
<rect x="521" y="0" width="13" height="13" fill="#d4d0c8"/>
<rect x="525" y="5" width="8" height="7" fill="#dedad3"/>
<rect x="533" y="0" width="1" height="13" fill="#404040"/><rect x="521" y="12" width="13" height="1" fill="#404040"/>
<line x1="521.5" y1="12.5" x2="533.5" y2="0" stroke="#000" stroke-width="1" shape-rendering="auto"/>
<polygon points="523,4 526.2,4 524.6,2" fill="#000" shape-rendering="auto"/>
<rect x="537" y="0" width="29" height="15" fill="#d6e3f3"/>
<rect x="537" y="15" width="29" height="1" fill="#a9c4e4"/>
<text y="10.82" font-size="12" fill="#000"  xml:space="preserve"><tspan x="539.5" >本数</tspan></text>
<rect x="567" y="0" width="48" height="15" fill="#fff"/><rect x="567" y="0" width="1" height="15" fill="#8c8c8c"/><rect x="567" y="15" width="48" height="1" fill="#f0f0f0"/>
<text y="10.82" font-size="12" fill="#000"  xml:space="preserve"><tspan x="580.86 586.86 592.86" font-size="12">500</tspan></text>
<rect x="601" y="0" width="13" height="13" fill="#d4d0c8"/>
<rect x="605" y="5" width="8" height="7" fill="#dedad3"/>
<rect x="613" y="0" width="1" height="13" fill="#404040"/><rect x="601" y="12" width="13" height="1" fill="#404040"/>
<line x1="601.5" y1="12.5" x2="613.5" y2="0" stroke="#000" stroke-width="1" shape-rendering="auto"/>
<polygon points="603,4 606.2,4 604.6,2" fill="#000" shape-rendering="auto"/>
<rect x="617" y="0" width="35" height="16" fill="#f2f2f2"/>
<rect x="618" y="0" width="33" height="15" fill="url(#bg)"/>
<rect x="650" y="0" width="1" height="14" fill="#6a6a6a"/>
<rect x="619" y="14" width="31" height="1" fill="#6a6a6a"/>
<text y="10.82" font-size="12" fill="#000"  xml:space="preserve"><tspan x="622.5" >適用</tspan></text>
<rect x="672" y="0" width="59" height="16" fill="#f2f2f2"/>
<rect x="673" y="0" width="57" height="15" fill="url(#bg)"/>
<rect x="729" y="0" width="1" height="14" fill="#6a6a6a"/>
<rect x="674" y="14" width="55" height="1" fill="#6a6a6a"/>
<text y="10.82" font-size="12" fill="#000"  xml:space="preserve"><tspan x="677.5" >複数銘柄</tspan></text>
</g>
<g id="bottom">
<defs><pattern id="chk" width="2" height="2" patternUnits="userSpaceOnUse"><rect width="2" height="2" fill="#fff"/><rect width="1" height="1" fill="#ebebeb"/><rect x="1" y="1" width="1" height="1" fill="#ebebeb"/></pattern></defs>
<rect x="0" y="586" width="830" height="10" fill="url(#chk)"/>
<rect x="365" y="586" width="301" height="10" fill="#e2e2e2"/><rect x="366" y="587" width="299" height="9" fill="#fff"/><rect x="367" y="588" width="298" height="8" fill="#efefef"/><rect x="665" y="586" width="1" height="10" fill="#8a8a8a"/>
<rect x="0" y="586" width="11" height="10" fill="#ececec"/><rect x="11" y="586" width="1" height="10" fill="#909090"/>
<polygon points="0,596 5,596 5,591" fill="#000"/>
<rect x="830" y="586" width="16" height="10" fill="#ececec"/><rect x="845" y="586" width="1" height="10" fill="#707070"/>
<polygon points="836,591 841,596 836,596" fill="#000"/>
<rect x="848" y="586" width="118" height="10" fill="#f4f4f4"/>
<rect x="851.5" y="589.5" width="8" height="8" fill="#fff" stroke="#a0a0a0"/>
<rect x="860" y="591" width="100" height="1" fill="#a0a0a0"/>
<rect x="966" y="586" width="17" height="10" fill="#a0a0a0"/><rect x="967" y="587" width="15" height="9" fill="#fff"/><rect x="968" y="588" width="13" height="8" fill="#e0e0e0"/>
<polygon points="969,596 975.6,596 975.6,589.6" fill="#000066" shape-rendering="auto"/><rect x="977" y="590" width="2" height="6" fill="#000066"/>
<rect x="983" y="586" width="17" height="10" fill="#a0a0a0"/><rect x="984" y="587" width="15" height="9" fill="#fff"/><rect x="985" y="588" width="13" height="8" fill="#e0e0e0"/>
<rect x="990" y="589" width="2" height="6" fill="#000"/><rect x="986" y="593" width="10" height="3" fill="#000"/>
<rect x="1000" y="586" width="17" height="10" fill="#a0a0a0"/><rect x="1001" y="587" width="15" height="9" fill="#fff"/><rect x="1002" y="588" width="13" height="8" fill="#e0e0e0"/>
<rect x="1004" y="594" width="9" height="2" fill="#000"/>
<rect x="1017" y="586" width="17" height="10" fill="#a0a0a0"/><rect x="1018" y="587" width="15" height="9" fill="#fff"/><rect x="1019" y="588" width="13" height="8" fill="#e0e0e0"/>
<rect x="1025" y="589" width="2" height="7" fill="#000066"/><polygon points="1021,596 1024.6,596 1024.6,592" fill="#000066" shape-rendering="auto"/><polygon points="1027.4,596 1031,596 1027.4,592" fill="#000066" shape-rendering="auto"/>
<rect x="1034" y="586" width="17" height="10" fill="#a0a0a0"/><rect x="1035" y="587" width="15" height="9" fill="#fff"/><rect x="1036" y="588" width="13" height="8" fill="#e0e0e0"/>
<rect x="1040" y="592" width="5" height="4" fill="#000066"/>
<rect x="1051" y="586" width="17" height="10" fill="#a0a0a0"/><rect x="1052" y="587" width="15" height="9" fill="#fff"/><rect x="1053" y="588" width="13" height="8" fill="#e0e0e0"/>
<polygon points="1058,590 1064,596 1058,596" fill="#000066" shape-rendering="auto"/>
<rect x="1068" y="586" width="17" height="10" fill="#a0a0a0"/><rect x="1069" y="587" width="15" height="9" fill="#fff"/><rect x="1070" y="588" width="13" height="8" fill="#e0e0e0"/>
<text x="1076.5" y="598.3" text-anchor="middle" font-size="13" font-weight="bold" font-family="'Liberation Sans',sans-serif" fill="#000">D</text>
<rect x="1085" y="586" width="17" height="10" fill="#a0a0a0"/><rect x="1086" y="587" width="15" height="9" fill="#fff"/><rect x="1087" y="588" width="13" height="8" fill="#e0e0e0"/>
<text x="1093.5" y="598.3" text-anchor="middle" font-size="13" font-weight="bold" font-family="'Liberation Sans',sans-serif" fill="#000">I</text>
<rect x="1102" y="586" width="17" height="10" fill="#a0a0a0"/><rect x="1103" y="587" width="15" height="9" fill="#fff"/><rect x="1104" y="588" width="13" height="8" fill="#e0e0e0"/>
<text x="1110.5" y="598.3" text-anchor="middle" font-size="13" font-weight="bold" font-family="'Liberation Sans',sans-serif" fill="#000">B</text>
<rect x="1119" y="586" width="17" height="10" fill="#a0a0a0"/><rect x="1120" y="587" width="15" height="9" fill="#fff"/><rect x="1121" y="588" width="13" height="8" fill="#e0e0e0"/>
<circle cx="1127.5" cy="595" r="5.3" fill="none" stroke="#000" stroke-width="1.5" shape-rendering="auto"/><polygon points="1124.3,596 1130.7,596 1127.5,592" fill="#000" shape-rendering="auto"/>
<rect x="1136" y="586" width="17" height="10" fill="#a0a0a0"/><rect x="1137" y="587" width="15" height="9" fill="#fff"/><rect x="1138" y="588" width="13" height="8" fill="#e0e0e0"/>
<polyline points="1140.0,590.5 1144.5,596 1149.0,590.5" fill="none" stroke="#000" stroke-width="2.3" shape-rendering="auto"/>
<rect x="1153" y="586" width="17" height="10" fill="#a0a0a0"/><rect x="1154" y="587" width="15" height="9" fill="#fff"/><rect x="1155" y="588" width="13" height="8" fill="#e0e0e0"/>
<rect x="1157" y="590" width="2" height="6" fill="#000066"/><polygon points="1160,590 1166.5,596 1160,596" fill="#000066"/>
<rect x="1169" y="586" width="1" height="10" fill="#a0a0a0"/>
<rect x="0" y="595" width="1172" height="2" fill="#fff"/>
<rect x="0" y="597" width="1171" height="1" fill="#000"/><rect x="0" y="598" width="1171" height="1" fill="#2a1422"/>
<rect x="0" y="599" width="1171" height="8" fill="#fff"/>
<clipPath id="cs"><rect x="0" y="599" width="1171" height="8"/></clipPath>
<g clip-path="url(#cs)">
<rect x="2" y="599" width="1" height="10" fill="#000"/>
<rect x="37" y="599" width="1" height="10" fill="#000"/>
<rect x="72" y="599" width="1" height="10" fill="#000"/>
<rect x="108" y="599" width="3" height="10" fill="#000"/>
<text y="613.02" font-size="12" fill="#000"  xml:space="preserve"><tspan x="13.86 19.86" font-size="12">10</tspan></text>
<text y="613.02" font-size="12" fill="#0af"  xml:space="preserve"><tspan x="44.86 50.86 56.86" font-size="12">000</tspan></text>
<text y="613.02" font-size="12" fill="#00f"  xml:space="preserve"><tspan x="85.36" font-size="12">0</tspan></text>
<text y="613.02" font-size="12" fill="#808080"  xml:space="preserve"><tspan x="112.03 116.36 122.36 130.03 134.36 140.36 148.03" font-size="12">[15:11]</tspan></text>
<text y="613.02" font-size="12" fill="#000"  xml:space="preserve"><tspan x="156.3" textLength="11" lengthAdjust="spacingAndGlyphs">JQ</tspan><tspan x="168" >指数</tspan></text>
<text y="613.02" font-size="12" fill="#000"  xml:space="preserve"><tspan x="229.36 235.36 243.03 247.36 253.36" font-size="12">84.00</tspan></text>
<text y="613.02" font-size="12" fill="#f00"  xml:space="preserve"><tspan x="279.3" font-family="'IPAGothic',monospace" >▲</tspan><tspan x="292.33 296.66 304.33 308.66 314.66" font-size="12"> 0.91</tspan></text>
<text y="613.02" font-size="12" fill="#f00"  xml:space="preserve"><tspan x="342.70 349.03 353.36 361.03 365.36 371.36 375.37 384.70" font-size="12">( 0.19%)</tspan></text>
<rect x="402" y="599" width="20" height="10" fill="#111"/>
<text y="613.02" font-size="12" fill="#000"  xml:space="preserve"><tspan x="423" >個別銘柄の</tspan><tspan x="482.36 488.36" font-size="12">18</tspan><tspan x="495" >日情報</tspan></text>
</g>
</g>
</svg>
</body></html>
